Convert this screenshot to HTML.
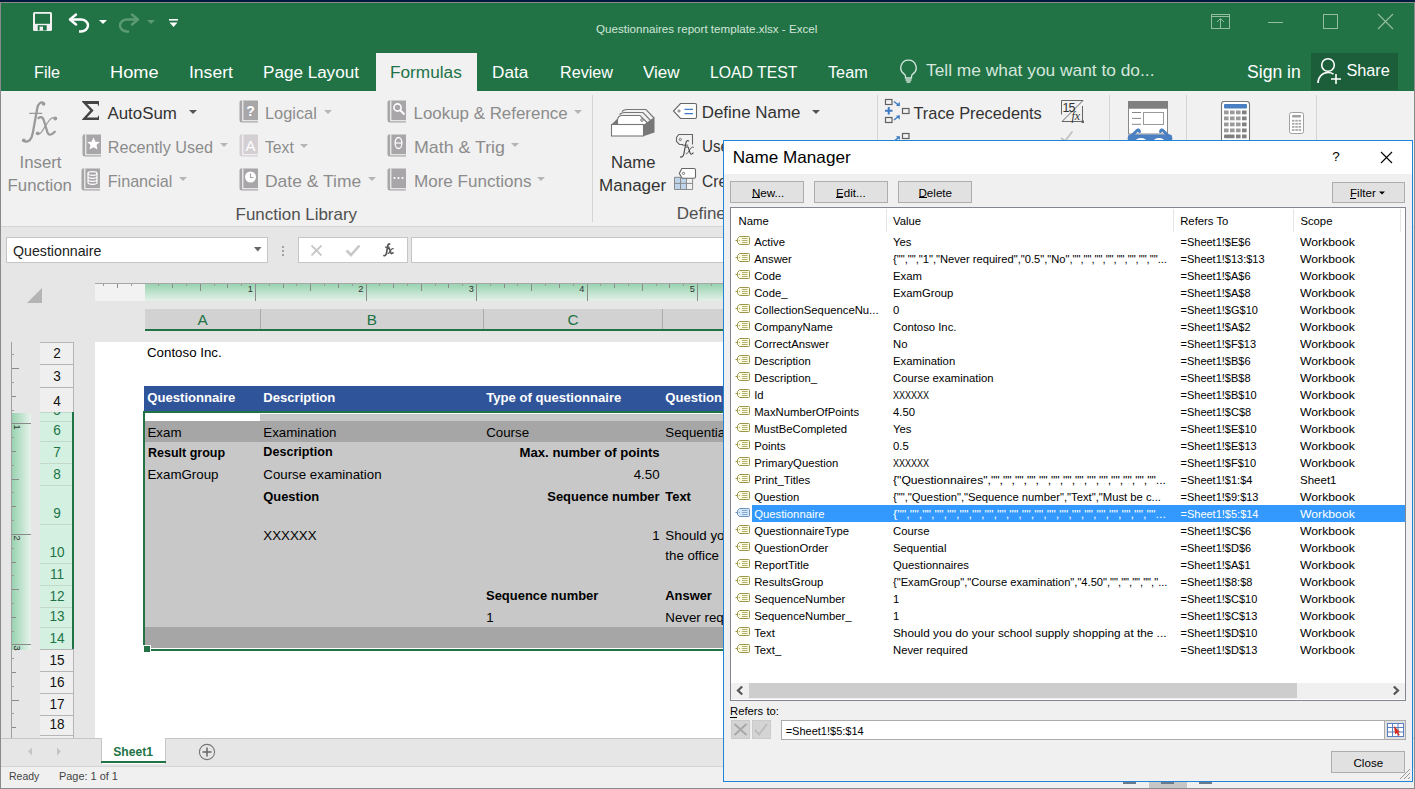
<!DOCTYPE html><html><head><meta charset="utf-8"><style>
html,body{margin:0;padding:0;}
body{width:1415px;height:789px;position:relative;overflow:hidden;background:#E6E6E6;font-family:"Liberation Sans",sans-serif;}
.t{position:absolute;white-space:nowrap;}
.r{position:absolute;}
</style></head><body>
<div class="r" style="left:0px;top:0px;width:1415px;height:789px;background:#E6E6E6;"></div>
<div class="r" style="left:0px;top:0px;width:1415px;height:3px;background:#011a3b;"></div>
<div class="r" style="left:0px;top:2px;width:1415px;height:1px;background:#8a8a8a;"></div>
<div class="r" style="left:1px;top:3px;width:1413px;height:88px;background:#217346;"></div>
<div class="r" style="left:0px;top:2px;width:1px;height:787px;background:#8a8a8a;"></div>
<div class="r" style="left:1414px;top:2px;width:1px;height:787px;background:#8a8a8a;"></div>
<svg class="r" style="left:32px;top:11px" width="21" height="21" viewBox="0 0 21 21"><rect x="1" y="1" width="19" height="19" rx="1.5" fill="#f2f2f2"/><rect x="3" y="2.8" width="15" height="10" fill="#217346"/><rect x="5.7" y="14.2" width="9" height="5.3" fill="#217346"/><rect x="7.6" y="15.6" width="3.4" height="3.9" fill="#f2f2f2"/></svg>
<svg class="r" style="left:68px;top:13px" width="24" height="20" viewBox="0 0 24 20"><path d="M2 6.5 L8 1.5 M2 6.5 L8 11.5" stroke="#fff" stroke-width="2.4" fill="none" stroke-linecap="round"/><path d="M2.5 6.5 H13 a7 6 0 0 1 0 12 H11" stroke="#fff" stroke-width="2.4" fill="none"/></svg>
<svg class="r" style="left:99px;top:20px" width="8" height="4" viewBox="0 0 8 4"><path d="M0 0h8l-4 4z" fill="#fff"/></svg>
<svg class="r" style="left:116px;top:13px" width="24" height="20" viewBox="0 0 24 20"><path d="M22 6.5 L16 1.5 M22 6.5 L16 11.5" stroke="#5c9a75" stroke-width="2.4" fill="none" stroke-linecap="round"/><path d="M21.5 6.5 H11 a7 6 0 0 0 0 12 H13" stroke="#5c9a75" stroke-width="2.4" fill="none"/></svg>
<svg class="r" style="left:147px;top:20px" width="8" height="4" viewBox="0 0 8 4"><path d="M0 0h8l-4 4z" fill="#5c9a75"/></svg>
<svg class="r" style="left:169px;top:19px" width="9" height="9" viewBox="0 0 9 9"><rect x="0" y="0" width="9" height="1.6" fill="#fff"/><path d="M0.5 3.5h8l-4 4.5z" fill="#fff"/></svg>
<div class="t" style="left:595.5px;top:20.5px;font-size:11.65px;line-height:15px;color:#d2e5d9;font-weight:normal;transform:scaleX(0.9974);transform-origin:0 0;">Questionnaires report template.xlsx - Excel</div>
<svg class="r" style="left:1210px;top:13px" width="21" height="17" viewBox="0 0 21 17"><rect x="1.5" y="1.5" width="18" height="14" fill="none" stroke="#95bda2" stroke-width="1"/><path d="M1.5 3.5h18M10.5 6v9.5M7 9l3.5-3.5 3.5 3.5" fill="none" stroke="#95bda2" stroke-width="1"/></svg>
<div class="r" style="left:1268px;top:22px;width:15px;height:1px;background:#95bda2;"></div>
<div class="r" style="left:1323px;top:14px;width:15px;height:15px;background:transparent;border:1px solid #95bda2;box-sizing:border-box"></div>
<svg class="r" style="left:1377px;top:13px" width="17" height="17" viewBox="0 0 17 17"><path d="M1 1l15 15M16 1L1 16" stroke="#95bda2" stroke-width="1.1"/></svg>
<div class="r" style="left:376px;top:53px;width:101px;height:38px;background:#F1F1F1;"></div>
<div class="t" style="left:34.3px;top:60.8px;font-size:17.3px;line-height:22px;color:#fff;font-weight:normal;transform:scaleX(0.9363);transform-origin:0 0;">File</div>
<div class="t" style="left:110.4px;top:60.8px;font-size:17.3px;line-height:22px;color:#fff;font-weight:normal;transform:scaleX(1.0532);transform-origin:0 0;">Home</div>
<div class="t" style="left:189.2px;top:60.8px;font-size:17.3px;line-height:22px;color:#fff;font-weight:normal;transform:scaleX(1.0147);transform-origin:0 0;">Insert</div>
<div class="t" style="left:263.4px;top:60.8px;font-size:17.3px;line-height:22px;color:#fff;font-weight:normal;transform:scaleX(0.9882);transform-origin:0 0;">Page Layout</div>
<div class="t" style="left:389.6px;top:60.8px;font-size:17.3px;line-height:22px;color:#217346;font-weight:normal;transform:scaleX(0.9973);transform-origin:0 0;">Formulas</div>
<div class="t" style="left:492.3px;top:60.8px;font-size:17.3px;line-height:22px;color:#fff;font-weight:normal;transform:scaleX(0.9934);transform-origin:0 0;">Data</div>
<div class="t" style="left:559.7px;top:60.8px;font-size:17.3px;line-height:22px;color:#fff;font-weight:normal;transform:scaleX(0.9361);transform-origin:0 0;">Review</div>
<div class="t" style="left:643.0px;top:60.8px;font-size:17.3px;line-height:22px;color:#fff;font-weight:normal;transform:scaleX(0.9843);transform-origin:0 0;">View</div>
<div class="t" style="left:710.2px;top:60.8px;font-size:17.3px;line-height:22px;color:#fff;font-weight:normal;transform:scaleX(0.9122);transform-origin:0 0;">LOAD TEST</div>
<div class="t" style="left:827.9px;top:60.8px;font-size:17.3px;line-height:22px;color:#fff;font-weight:normal;transform:scaleX(0.9385);transform-origin:0 0;">Team</div>
<svg class="r" style="left:899px;top:59px" width="19" height="24" viewBox="0 0 19 24"><path d="M9.5 1.2a7.6 7.6 0 0 0-4.3 13.9c.8.6 1.3 1.5 1.3 2.5v1.4h6v-1.4c0-1 .5-1.9 1.3-2.5A7.6 7.6 0 0 0 9.5 1.2z" fill="none" stroke="#d6e6dc" stroke-width="1.3"/><path d="M6.5 21h6M7.5 23h4" stroke="#d6e6dc" stroke-width="1.3"/></svg>
<div class="t" style="left:926.0px;top:58.5px;font-size:17.35px;line-height:23px;color:#d6e6dc;font-weight:normal;">Tell me what you want to do...</div>
<div class="t" style="left:1247.0px;top:61.4px;font-size:17.6px;line-height:23px;color:#fff;font-weight:normal;">Sign in</div>
<div class="r" style="left:1311px;top:53px;width:87px;height:37px;background:#1b5e39;"></div>
<svg class="r" style="left:1317px;top:57px" width="25" height="28" viewBox="0 0 25 28"><circle cx="11" cy="8" r="6.3" fill="none" stroke="#fff" stroke-width="1.6"/><path d="M1 26c0-6 4.5-10.5 10-10.5 2.2 0 4 .6 5.5 1.6" fill="none" stroke="#fff" stroke-width="1.6"/><path d="M19 17v10M14 22h10" stroke="#fff" stroke-width="1.6"/></svg>
<div class="t" style="left:1346.4px;top:59.9px;font-size:16.3px;line-height:21px;color:#fff;font-weight:normal;">Share</div>
<div class="r" style="left:1px;top:91px;width:1413px;height:135px;background:#F1F1F1;"></div>
<div class="r" style="left:1px;top:226px;width:1413px;height:1px;background:#D5D5D5;"></div>
<svg class="r" style="left:15px;top:95px" width="50" height="55" viewBox="15 95 50 55"><g fill="none" stroke="#9a9a9a" stroke-linecap="round"><path d="M43.8 103.2C41 101.3 38.2 103 37.2 108.5L32.8 133C31.6 139.5 28.5 142.8 24.5 141.2" stroke-width="2.3"/><path d="M29.6 113.3H41.8" stroke-width="1.2"/><path d="M38.5 118C41.5 116 43.2 117.5 44.2 121.5L47.3 132C48.3 135.3 50.8 136 54.8 131.8" stroke-width="2.3"/><path d="M55.5 118.2C52.5 116.5 50.5 118.5 47 123.5L42.5 130.5C40.5 134 38.8 134.5 37.5 133" stroke-width="1.3"/></g><circle cx="43.6" cy="104" r="1.8" fill="#9a9a9a"/><circle cx="23.8" cy="140.3" r="1.9" fill="#9a9a9a"/><circle cx="55.3" cy="118.5" r="1.9" fill="#9a9a9a"/><circle cx="37.7" cy="133.3" r="1.9" fill="#9a9a9a"/></svg>
<div class="t" style="left:19.5px;top:152.4px;font-size:16.8px;line-height:22px;color:#8a8a8a;font-weight:normal;">Insert</div>
<div class="t" style="left:7.6px;top:175.0px;font-size:16.8px;line-height:22px;color:#8a8a8a;font-weight:normal;">Function</div>
<svg class="r" style="left:81px;top:100px" width="19" height="21" viewBox="0 0 19 21"><path d="M1 1H18V6.5L16.5 4H6.2L12.6 10.5 6 17.5H16.5L18 15V20H1V19.5L9.2 10.5 1 1.8z" fill="#454545"/></svg>
<div class="t" style="left:107.4px;top:102.9px;font-size:16.9px;line-height:22px;color:#333;font-weight:normal;">AutoSum</div>
<svg class="r" style="left:189px;top:110px" width="8" height="4" viewBox="0 0 8 4"><path d="M0 0h8l-4 4z" fill="#555"/></svg>
<svg class="r" style="left:239px;top:100px" width="20" height="23" viewBox="0 0 20 23"><path d="M1.5 0.5H19V22.5H3A2.5 2.5 0 0 1 0.5 20V2z" fill="#A8A6A8"/><path d="M3.8 0.5V20.8H19" stroke="#fafafa" stroke-width="1.1" fill="none"/><text x="11.5" y="16" font-family="Liberation Sans" font-weight="bold" font-size="14" fill="#fff" text-anchor="middle">?</text></svg>
<svg class="r" style="left:82px;top:134px" width="20" height="23" viewBox="0 0 20 23"><path d="M1.5 0.5H19V22.5H3A2.5 2.5 0 0 1 0.5 20V2z" fill="#A8A6A8"/><path d="M3.8 0.5V20.8H19" stroke="#fafafa" stroke-width="1.1" fill="none"/><path d="M11.5 3.5l1.9 4.2 4.5.4-3.4 3 1 4.4-4-2.3-4 2.3 1-4.4-3.4-3 4.5-.4z" fill="#fff"/></svg>
<svg class="r" style="left:81px;top:168px" width="20" height="23" viewBox="0 0 20 23"><path d="M1.5 0.5H19V22.5H3A2.5 2.5 0 0 1 0.5 20V2z" fill="#A8A6A8"/><path d="M3.8 0.5V20.8H19" stroke="#fafafa" stroke-width="1.1" fill="none"/><ellipse cx="11.5" cy="5.5" rx="4.5" ry="1.8" fill="none" stroke="#fff" stroke-width="1.2"/><path d="M7 5.5v9c0 1 2 1.8 4.5 1.8s4.5-.8 4.5-1.8v-9M7 8.5c0 1 2 1.8 4.5 1.8s4.5-.8 4.5-1.8M7 11.5c0 1 2 1.8 4.5 1.8s4.5-.8 4.5-1.8" fill="none" stroke="#fff" stroke-width="1.2"/></svg>
<svg class="r" style="left:239px;top:134px" width="20" height="23" viewBox="0 0 20 23"><path d="M1.5 0.5H19V22.5H3A2.5 2.5 0 0 1 0.5 20V2z" fill="#D3CFD3"/><path d="M3.8 0.5V20.8H19" stroke="#fafafa" stroke-width="1.1" fill="none"/><text x="11.5" y="16.5" font-family="Liberation Sans" font-size="15" fill="#fff" text-anchor="middle">A</text></svg>
<svg class="r" style="left:239px;top:168px" width="20" height="23" viewBox="0 0 20 23"><path d="M1.5 0.5H19V22.5H3A2.5 2.5 0 0 1 0.5 20V2z" fill="#A8A6A8"/><path d="M3.8 0.5V20.8H19" stroke="#fafafa" stroke-width="1.1" fill="none"/><circle cx="11.5" cy="9" r="5.5" fill="#fff"/><path d="M11.5 5.5V9.5H14.5" stroke="#A8A6A8" stroke-width="1.2" fill="none"/></svg>
<svg class="r" style="left:387px;top:100px" width="20" height="23" viewBox="0 0 20 23"><path d="M1.5 0.5H19V22.5H3A2.5 2.5 0 0 1 0.5 20V2z" fill="#A8A6A8"/><path d="M3.8 0.5V20.8H19" stroke="#fafafa" stroke-width="1.1" fill="none"/><circle cx="10.5" cy="7.5" r="3.6" fill="none" stroke="#fff" stroke-width="1.6"/><path d="M13 10l4.5 4.5" stroke="#fff" stroke-width="2"/></svg>
<svg class="r" style="left:387px;top:134px" width="20" height="23" viewBox="0 0 20 23"><path d="M1.5 0.5H19V22.5H3A2.5 2.5 0 0 1 0.5 20V2z" fill="#A8A6A8"/><path d="M3.8 0.5V20.8H19" stroke="#fafafa" stroke-width="1.1" fill="none"/><ellipse cx="11.5" cy="9" rx="3.4" ry="5.5" fill="none" stroke="#fff" stroke-width="1.3"/><path d="M8 9h7" stroke="#fff" stroke-width="1.2"/></svg>
<svg class="r" style="left:387px;top:168px" width="20" height="23" viewBox="0 0 20 23"><path d="M1.5 0.5H19V22.5H3A2.5 2.5 0 0 1 0.5 20V2z" fill="#A8A6A8"/><path d="M3.8 0.5V20.8H19" stroke="#fafafa" stroke-width="1.1" fill="none"/><circle cx="7.5" cy="10" r="1.1" fill="#fff"/><circle cx="11.5" cy="10" r="1.1" fill="#fff"/><circle cx="15.5" cy="10" r="1.1" fill="#fff"/></svg>
<div class="t" style="left:107.7px;top:137.4px;font-size:16.22px;line-height:21px;color:#8c8c8c;font-weight:normal;">Recently Used</div>
<svg class="r" style="left:220px;top:143px" width="8" height="4" viewBox="0 0 8 4"><path d="M0 0h8l-4 4z" fill="#b5b5b5"/></svg>
<div class="t" style="left:107.7px;top:171.3px;font-size:16.17px;line-height:21px;color:#8c8c8c;font-weight:normal;">Financial</div>
<svg class="r" style="left:179px;top:177px" width="8" height="4" viewBox="0 0 8 4"><path d="M0 0h8l-4 4z" fill="#b5b5b5"/></svg>
<div class="t" style="left:265.4px;top:102.7px;font-size:16.6px;line-height:22px;color:#8c8c8c;font-weight:normal;transform:scaleX(0.9848);transform-origin:0 0;">Logical</div>
<svg class="r" style="left:324px;top:110px" width="8" height="4" viewBox="0 0 8 4"><path d="M0 0h8l-4 4z" fill="#b5b5b5"/></svg>
<div class="t" style="left:265.4px;top:136.7px;font-size:16.6px;line-height:22px;color:#8c8c8c;font-weight:normal;transform:scaleX(0.9460);transform-origin:0 0;">Text</div>
<svg class="r" style="left:300px;top:144px" width="8" height="4" viewBox="0 0 8 4"><path d="M0 0h8l-4 4z" fill="#b5b5b5"/></svg>
<div class="t" style="left:265.4px;top:170.6px;font-size:16.6px;line-height:22px;color:#8c8c8c;font-weight:normal;transform:scaleX(1.0533);transform-origin:0 0;">Date &amp; Time</div>
<svg class="r" style="left:368px;top:177px" width="8" height="4" viewBox="0 0 8 4"><path d="M0 0h8l-4 4z" fill="#b5b5b5"/></svg>
<div class="t" style="left:413.5px;top:102.6px;font-size:16.92px;line-height:22px;color:#8c8c8c;font-weight:normal;">Lookup &amp; Reference</div>
<svg class="r" style="left:574px;top:110px" width="8" height="4" viewBox="0 0 8 4"><path d="M0 0h8l-4 4z" fill="#b5b5b5"/></svg>
<div class="t" style="left:413.5px;top:136.7px;font-size:16.6px;line-height:22px;color:#8c8c8c;font-weight:normal;transform:scaleX(1.0723);transform-origin:0 0;">Math &amp; Trig</div>
<svg class="r" style="left:511px;top:143px" width="8" height="4" viewBox="0 0 8 4"><path d="M0 0h8l-4 4z" fill="#b5b5b5"/></svg>
<div class="t" style="left:413.5px;top:170.6px;font-size:16.6px;line-height:22px;color:#8c8c8c;font-weight:normal;transform:scaleX(1.0272);transform-origin:0 0;">More Functions</div>
<svg class="r" style="left:537px;top:177px" width="8" height="4" viewBox="0 0 8 4"><path d="M0 0h8l-4 4z" fill="#b5b5b5"/></svg>
<div class="t" style="left:235.6px;top:203.7px;font-size:16.95px;line-height:22px;color:#505050;font-weight:normal;">Function Library</div>
<div class="r" style="left:592px;top:95px;width:1px;height:127px;background:#D5D5D5;"></div>
<svg class="r" style="left:610px;top:105px" width="46" height="34" viewBox="0 0 46 34"><path d="M12 6.5Q14 4.5 17 4.5H36L44 13" fill="none" stroke="#777" stroke-width="1.1"/><path d="M9.5 9.5Q11.5 7.5 15 7.5H33L41 16" fill="none" stroke="#777" stroke-width="1.1"/><path d="M7.5 19V15.5Q7.5 10.5 12.5 10.5H30L38.5 19" fill="#fff" stroke="#777" stroke-width="1.1"/><circle cx="32" cy="15" r="1.3" fill="none" stroke="#777" stroke-width="1"/><path d="M1.5 19.5L7 14V19.5z" fill="#777"/><rect x="1.5" y="19.5" width="32" height="11.5" fill="#fff" stroke="#777" stroke-width="1.1"/><path d="M34 19.5L44.5 12V27.5L34 31z" fill="#777"/></svg>
<div class="t" style="left:610.7px;top:151.6px;font-size:16.8px;line-height:22px;color:#333;font-weight:normal;transform:scaleX(0.9931);transform-origin:0 0;">Name</div>
<div class="t" style="left:599.4px;top:175.0px;font-size:16.8px;line-height:22px;color:#333;font-weight:normal;transform:scaleX(1.0151);transform-origin:0 0;">Manager</div>
<svg class="r" style="left:670px;top:100px" width="30" height="22" viewBox="670 100 30 22"><path d="M680.5 103.5H695Q696.5 103.5 696.5 105V117Q696.5 118.5 695 118.5H680.5L673.5 111z" fill="#fff" stroke="#666" stroke-width="1.1"/><circle cx="679" cy="111" r="1.1" fill="none" stroke="#666" stroke-width="0.9"/><path d="M684.5 109.3h8.5M684.5 113.6h8.5" stroke="#3e7cc2" stroke-width="1.2"/></svg>
<div class="t" style="left:701.7px;top:102.3px;font-size:16.93px;line-height:22px;color:#333;font-weight:normal;">Define Name</div>
<svg class="r" style="left:812px;top:110px" width="8" height="4" viewBox="0 0 8 4"><path d="M0 0h8l-4 4z" fill="#555"/></svg>
<svg class="r" style="left:670px;top:130px" width="30" height="30" viewBox="670 130 30 30"><path d="M683 144.5H679.5L676.5 141.5V137.5L678.8 134.5H692.5V144.5" fill="none" stroke="#666" stroke-width="1.1"/><circle cx="680.3" cy="139.5" r="1.1" fill="none" stroke="#666" stroke-width="0.9"/><g transform="translate(670.2 97.6) scale(0.42)"><g fill="none" stroke="#444" stroke-linecap="round"><path d="M43.8 103.2C41 101.3 38.2 103 37.2 108.5L32.8 133C31.6 139.5 28.5 142.8 24.5 141.2" stroke-width="2.6"/><path d="M29.6 113.3H41.8" stroke-width="2"/><path d="M38.5 118C41.5 116 43.2 117.5 44.2 121.5L47.3 132C48.3 135.3 50.8 136 54.8 131.8" stroke-width="2.6"/><path d="M55.5 118.2C52.5 116.5 50.5 118.5 47 123.5L42.5 130.5C40.5 134 38.8 134.5 37.5 133" stroke-width="2"/></g></g></svg>
<div class="t" style="left:701.7px;top:136.4px;font-size:16.9px;line-height:22px;color:#333;font-weight:normal;transform:scaleX(0.9000);transform-origin:0 0;">Use in Formula</div>
<svg class="r" style="left:670px;top:165px" width="30" height="28" viewBox="670 165 30 28"><rect x="674.3" y="177.1" width="12.2" height="12.6" fill="#bcd3ea"/><path d="M674.5 177.1V189.5H692.6V178.5M674.5 183.4H692.6M680.5 177.1V189.5M686.5 177.1V189.5M674.5 177.3H680" fill="none" stroke="#8a8a8a" stroke-width="1"/><path d="M681.8 168.5H694Q695.5 168.5 695.5 170V176.8Q695.5 178.3 694 178.3H682.2L679.3 173.4z" fill="#fff" stroke="#666" stroke-width="1.1"/><circle cx="683.5" cy="173.4" r="1.1" fill="none" stroke="#666" stroke-width="0.9"/></svg>
<div class="t" style="left:701.7px;top:170.5px;font-size:16.9px;line-height:22px;color:#333;font-weight:normal;transform:scaleX(0.9200);transform-origin:0 0;">Create from Selection</div>
<div class="t" style="left:676.8px;top:203.2px;font-size:16.95px;line-height:22px;color:#505050;font-weight:normal;">Defined Names</div>
<div class="r" style="left:877px;top:95px;width:1px;height:127px;background:#D5D5D5;"></div>
<svg class="r" style="left:880px;top:95px" width="35" height="30" viewBox="880 95 35 30"><g fill="none" stroke="#606060" stroke-width="1.2"><rect x="885.5" y="99.5" width="6.5" height="5"/><rect x="885.5" y="117.5" width="6.5" height="5"/><rect x="902.5" y="108.5" width="6.5" height="5"/></g><path d="M885 110.8h7.5M888.75 107v7.5" stroke="#3e7cc2" stroke-width="2"/><path d="M894 101.5L899 105.5M894 120L899 116" stroke="#3e7cc2" stroke-width="1.5"/><path d="M899.8 106.3V101.8L896 105.8zM899.8 115.2V119.7L896 115.7z" fill="#3e7cc2"/></svg>
<div class="t" style="left:913.5px;top:103.1px;font-size:16.33px;line-height:21px;color:#333;font-weight:normal;">Trace Precedents</div>
<svg class="r" style="left:1055px;top:95px" width="35" height="30" viewBox="1055 95 35 30"><path d="M1061.5 114.5V100.5H1083L1062 121.5H1082.5V106" fill="none" stroke="#666" stroke-width="1"/><text x="1062.5" y="112" font-family="Liberation Sans" font-size="12.5" letter-spacing="-1" fill="#333">15</text><text x="1071.5" y="119.5" font-family="Liberation Serif" font-style="italic" font-size="12" fill="#333">fx</text><rect x="1081.5" y="120.5" width="2.5" height="2.5" fill="#666"/></svg>
<svg class="r" style="left:880px;top:126px" width="35" height="15" viewBox="880 126 35 15"><rect x="902.5" y="133.5" width="6.5" height="5" fill="none" stroke="#606060" stroke-width="1.2"/><path d="M895 140.5L899 137" stroke="#3e7cc2" stroke-width="1.5"/><path d="M900 136.2H895.8L899.8 140z" fill="#3e7cc2"/></svg>
<svg class="r" style="left:1055px;top:126px" width="30" height="15" viewBox="1055 126 30 15"><path d="M1061 138l4 3M1065 141l7.5-9.5" stroke="#c2c2c2" stroke-width="1.8" fill="none"/></svg>
<div class="r" style="left:1109px;top:95px;width:1px;height:127px;background:#D5D5D5;"></div>
<svg class="r" style="left:1120px;top:95px" width="60" height="46" viewBox="1120 95 60 46"><rect x="1128.5" y="108" width="39" height="26" fill="#fff" stroke="#888" stroke-width="1"/><rect x="1128" y="101" width="40" height="7.5" fill="#808080"/><path d="M1132 112.5h9M1132 118.4h9M1132 124.3h9" stroke="#888" stroke-width="1"/><rect x="1143.5" y="112.5" width="20" height="12" fill="#fff" stroke="#999" stroke-width="1"/><path d="M1129 138.5L1137 130.5Q1138.5 129 1139.5 131.5M1171 138.5L1163 130.5Q1161.5 129 1160.5 131.5" stroke="#4a7fc1" stroke-width="3" fill="none" stroke-linecap="round"/><rect x="1128" y="134.5" width="44" height="6" rx="2" fill="#4a7fc1"/><ellipse cx="1141" cy="141" rx="5.5" ry="3" fill="#fff"/><ellipse cx="1159" cy="141" rx="5.5" ry="3" fill="#fff"/></svg>
<div class="r" style="left:1186px;top:95px;width:1px;height:127px;background:#D5D5D5;"></div>
<svg class="r" style="left:1220px;top:101px" width="31" height="41" viewBox="0 0 31 41"><rect x="1.5" y="0.5" width="28" height="42" rx="3" fill="#fff" stroke="#777" stroke-width="1.1"/><rect x="4" y="3" width="23" height="4.5" rx="1" fill="#4a7fc1"/><rect x="4" y="9.5" width="4.6" height="3.8" fill="#9a9a9a"/><rect x="10" y="9.5" width="4.6" height="3.8" fill="#9a9a9a"/><rect x="16" y="9.5" width="4.6" height="3.8" fill="#9a9a9a"/><rect x="22" y="9.5" width="4.6" height="3.8" fill="#808080"/><rect x="4" y="15.5" width="4.6" height="3.8" fill="#9a9a9a"/><rect x="10" y="15.5" width="4.6" height="3.8" fill="#9a9a9a"/><rect x="16" y="15.5" width="4.6" height="3.8" fill="#9a9a9a"/><rect x="22" y="15.5" width="4.6" height="3.8" fill="#808080"/><rect x="4" y="21.5" width="4.6" height="3.8" fill="#9a9a9a"/><rect x="10" y="21.5" width="4.6" height="3.8" fill="#9a9a9a"/><rect x="16" y="21.5" width="4.6" height="3.8" fill="#9a9a9a"/><rect x="22" y="21.5" width="4.6" height="3.8" fill="#808080"/><rect x="4" y="27.5" width="4.6" height="3.8" fill="#9a9a9a"/><rect x="10" y="27.5" width="4.6" height="3.8" fill="#9a9a9a"/><rect x="16" y="27.5" width="4.6" height="3.8" fill="#9a9a9a"/><rect x="22" y="27.5" width="4.6" height="3.8" fill="#808080"/><rect x="4" y="33.5" width="10.6" height="3.8" rx="1" fill="#808080"/><rect x="16" y="33.5" width="4.6" height="3.8" fill="#808080"/><rect x="22" y="33.5" width="4.6" height="3.8" fill="#808080"/></svg>
<svg class="r" style="left:1288px;top:111px" width="17" height="24" viewBox="0 0 17 24"><rect x="1.5" y="1.5" width="14" height="21" rx="2" fill="#fff" stroke="#a0a0a0" stroke-width="1"/><rect x="4" y="4" width="9" height="2.5" rx="1" fill="#a0a0a0"/><rect x="4.0" y="8.8" width="2.5" height="1.8" fill="#a8a8a8"/><rect x="7.3" y="8.8" width="2.5" height="1.8" fill="#a8a8a8"/><rect x="10.6" y="8.8" width="2.5" height="1.8" fill="#a8a8a8"/><rect x="4.0" y="11.9" width="2.5" height="1.8" fill="#a8a8a8"/><rect x="7.3" y="11.9" width="2.5" height="1.8" fill="#a8a8a8"/><rect x="10.6" y="11.9" width="2.5" height="1.8" fill="#a8a8a8"/><rect x="4.0" y="15.0" width="2.5" height="1.8" fill="#a8a8a8"/><rect x="7.3" y="15.0" width="2.5" height="1.8" fill="#a8a8a8"/><rect x="10.6" y="15.0" width="2.5" height="1.8" fill="#a8a8a8"/><rect x="4.0" y="18.1" width="2.5" height="1.8" fill="#a8a8a8"/><rect x="7.3" y="18.1" width="2.5" height="1.8" fill="#a8a8a8"/><rect x="10.6" y="18.1" width="2.5" height="1.8" fill="#a8a8a8"/></svg>
<div class="r" style="left:1316px;top:95px;width:1px;height:127px;background:#D5D5D5;"></div>
<div class="r" style="left:6px;top:237px;width:262px;height:26px;background:#fff;border:1px solid #C6C6C6;box-sizing:border-box"></div>
<div class="t" style="left:13.0px;top:241.5px;font-size:14.2px;line-height:18px;color:#222;font-weight:normal;">Questionnaire</div>
<svg class="r" style="left:254px;top:247px" width="8" height="5" viewBox="0 0 8 5"><path d="M0 0h7.5l-3.75 4.5z" fill="#666"/></svg>
<div class="r" style="left:282px;top:245.5px;width:2px;height:2px;background:#a0a0a0;"></div>
<div class="r" style="left:282px;top:249.5px;width:2px;height:2px;background:#a0a0a0;"></div>
<div class="r" style="left:282px;top:253.5px;width:2px;height:2px;background:#a0a0a0;"></div>
<div class="r" style="left:298px;top:237px;width:110px;height:26px;background:#fff;border:1px solid #C6C6C6;box-sizing:border-box"></div>
<svg class="r" style="left:310px;top:244px" width="13" height="13" viewBox="0 0 13 13"><path d="M1.5 1.5l10 10M11.5 1.5l-10 10" stroke="#c8c8c8" stroke-width="1.8"/></svg>
<svg class="r" style="left:345px;top:244px" width="16" height="13" viewBox="0 0 16 13"><path d="M1.5 6.5l4.5 4.5L14.5 1.5" stroke="#c8c8c8" stroke-width="2.6" fill="none"/></svg>
<svg class="r" style="left:375px;top:238px" width="25" height="22" viewBox="375 238 25 22"><g transform="translate(376.6 213.2) scale(0.3)"><g fill="none" stroke="#555" stroke-linecap="round"><path d="M43.8 103.2C41 101.3 38.2 103 37.2 108.5L32.8 133C31.6 139.5 28.5 142.8 24.5 141.2" stroke-width="5.5"/><path d="M29.6 113.3H41.8" stroke-width="4"/><path d="M38.5 118C41.5 116 43.2 117.5 44.2 121.5L47.3 132C48.3 135.3 50.8 136 54.8 131.8" stroke-width="5.5"/><path d="M55.5 118.2C52.5 116.5 50.5 118.5 47 123.5L42.5 130.5C40.5 134 38.8 134.5 37.5 133" stroke-width="4"/></g></g></svg>
<div class="r" style="left:411px;top:237px;width:330px;height:26px;background:#fff;border:1px solid #C6C6C6;box-sizing:border-box"></div>
<svg class="r" style="left:27px;top:288px" width="16" height="15" viewBox="0 0 16 15"><path d="M15 0V15H0z" fill="#b4b4b4"/></svg>
<div class="r" style="left:95px;top:283px;width:630px;height:1px;background:#a8a8a8;"></div>
<div class="r" style="left:95px;top:284px;width:50px;height:17px;background:#F2F2F2;"></div>
<div class="r" style="left:145px;top:284px;width:580px;height:17px;background:linear-gradient(#98d3b0,#e4f1e9)"></div>
<div class="r" style="left:103px;top:284px;width:1px;height:2px;background:#9a9a9a;"></div>
<div class="r" style="left:117px;top:284px;width:1px;height:4px;background:#8a8a8a;"></div>
<div class="r" style="left:131px;top:284px;width:1px;height:2px;background:#9a9a9a;"></div>
<div class="r" style="left:158px;top:284px;width:1px;height:2px;background:#9a9a9a;"></div>
<div class="r" style="left:172px;top:284px;width:1px;height:4px;background:#8a8a8a;"></div>
<div class="r" style="left:186px;top:284px;width:1px;height:2px;background:#9a9a9a;"></div>
<div class="r" style="left:200px;top:284px;width:1px;height:7px;background:#8a8a8a;"></div>
<div class="r" style="left:214px;top:284px;width:1px;height:2px;background:#9a9a9a;"></div>
<div class="r" style="left:227px;top:284px;width:1px;height:4px;background:#8a8a8a;"></div>
<div class="r" style="left:241px;top:284px;width:1px;height:2px;background:#9a9a9a;"></div>
<div class="r" style="left:255px;top:284px;width:1px;height:17px;background:#8a8a8a;"></div>
<div class="r" style="left:269px;top:284px;width:1px;height:2px;background:#9a9a9a;"></div>
<div class="r" style="left:283px;top:284px;width:1px;height:4px;background:#8a8a8a;"></div>
<div class="r" style="left:296px;top:284px;width:1px;height:2px;background:#9a9a9a;"></div>
<div class="r" style="left:310px;top:284px;width:1px;height:7px;background:#8a8a8a;"></div>
<div class="r" style="left:324px;top:284px;width:1px;height:2px;background:#9a9a9a;"></div>
<div class="r" style="left:338px;top:284px;width:1px;height:4px;background:#8a8a8a;"></div>
<div class="r" style="left:352px;top:284px;width:1px;height:2px;background:#9a9a9a;"></div>
<div class="r" style="left:366px;top:284px;width:1px;height:17px;background:#8a8a8a;"></div>
<div class="r" style="left:379px;top:284px;width:1px;height:2px;background:#9a9a9a;"></div>
<div class="r" style="left:393px;top:284px;width:1px;height:4px;background:#8a8a8a;"></div>
<div class="r" style="left:407px;top:284px;width:1px;height:2px;background:#9a9a9a;"></div>
<div class="r" style="left:421px;top:284px;width:1px;height:7px;background:#8a8a8a;"></div>
<div class="r" style="left:435px;top:284px;width:1px;height:2px;background:#9a9a9a;"></div>
<div class="r" style="left:448px;top:284px;width:1px;height:4px;background:#8a8a8a;"></div>
<div class="r" style="left:462px;top:284px;width:1px;height:2px;background:#9a9a9a;"></div>
<div class="r" style="left:476px;top:284px;width:1px;height:17px;background:#8a8a8a;"></div>
<div class="r" style="left:490px;top:284px;width:1px;height:2px;background:#9a9a9a;"></div>
<div class="r" style="left:504px;top:284px;width:1px;height:4px;background:#8a8a8a;"></div>
<div class="r" style="left:517px;top:284px;width:1px;height:2px;background:#9a9a9a;"></div>
<div class="r" style="left:531px;top:284px;width:1px;height:7px;background:#8a8a8a;"></div>
<div class="r" style="left:545px;top:284px;width:1px;height:2px;background:#9a9a9a;"></div>
<div class="r" style="left:559px;top:284px;width:1px;height:4px;background:#8a8a8a;"></div>
<div class="r" style="left:573px;top:284px;width:1px;height:2px;background:#9a9a9a;"></div>
<div class="r" style="left:587px;top:284px;width:1px;height:17px;background:#8a8a8a;"></div>
<div class="r" style="left:600px;top:284px;width:1px;height:2px;background:#9a9a9a;"></div>
<div class="r" style="left:614px;top:284px;width:1px;height:4px;background:#8a8a8a;"></div>
<div class="r" style="left:628px;top:284px;width:1px;height:2px;background:#9a9a9a;"></div>
<div class="r" style="left:642px;top:284px;width:1px;height:7px;background:#8a8a8a;"></div>
<div class="r" style="left:656px;top:284px;width:1px;height:2px;background:#9a9a9a;"></div>
<div class="r" style="left:669px;top:284px;width:1px;height:4px;background:#8a8a8a;"></div>
<div class="r" style="left:683px;top:284px;width:1px;height:2px;background:#9a9a9a;"></div>
<div class="r" style="left:697px;top:284px;width:1px;height:17px;background:#8a8a8a;"></div>
<div class="r" style="left:711px;top:284px;width:1px;height:2px;background:#9a9a9a;"></div>
<div class="t" style="left:0;width:252.9px;text-align:right;top:282.8px;font-size:9.2px;line-height:12px;color:#333;font-weight:normal;">1</div>
<div class="t" style="left:0;width:363.4px;text-align:right;top:282.8px;font-size:9.2px;line-height:12px;color:#333;font-weight:normal;">2</div>
<div class="t" style="left:0;width:473.9px;text-align:right;top:282.8px;font-size:9.2px;line-height:12px;color:#333;font-weight:normal;">3</div>
<div class="t" style="left:0;width:584.4px;text-align:right;top:282.8px;font-size:9.2px;line-height:12px;color:#333;font-weight:normal;">4</div>
<div class="t" style="left:0;width:694.9px;text-align:right;top:282.8px;font-size:9.2px;line-height:12px;color:#333;font-weight:normal;">5</div>
<div class="r" style="left:145px;top:309px;width:580px;height:22px;background:#D2D2D2;"></div>
<div class="r" style="left:145px;top:329px;width:580px;height:2px;background:#217346;"></div>
<div class="r" style="left:260px;top:309px;width:1px;height:20px;background:#ABABAB;"></div>
<div class="r" style="left:483px;top:309px;width:1px;height:20px;background:#ABABAB;"></div>
<div class="r" style="left:662px;top:309px;width:1px;height:20px;background:#ABABAB;"></div>
<div class="t" style="left:2.5px;width:400px;text-align:center;top:309.7px;font-size:15.3px;line-height:20px;color:#217346;font-weight:normal;">A</div>
<div class="t" style="left:171.8px;width:400px;text-align:center;top:309.7px;font-size:15.3px;line-height:20px;color:#217346;font-weight:normal;">B</div>
<div class="t" style="left:373.0px;width:400px;text-align:center;top:309.7px;font-size:15.3px;line-height:20px;color:#217346;font-weight:normal;">C</div>
<div class="r" style="left:95px;top:342px;width:630px;height:396px;background:#fff;"></div>
<div class="r" style="left:11px;top:342px;width:1px;height:396px;background:#a0a0a0;"></div>
<div class="r" style="left:12px;top:413px;width:19px;height:237px;background:linear-gradient(90deg,#98d3b0,#e4f1e9 95%)"></div>
<div class="r" style="left:12px;top:354px;width:2px;height:1px;background:#9a9a9a;"></div>
<div class="r" style="left:12px;top:368px;width:7px;height:1px;background:#8a8a8a;"></div>
<div class="r" style="left:12px;top:382px;width:2px;height:1px;background:#9a9a9a;"></div>
<div class="r" style="left:12px;top:396px;width:4px;height:1px;background:#8a8a8a;"></div>
<div class="r" style="left:12px;top:410px;width:2px;height:1px;background:#9a9a9a;"></div>
<div class="r" style="left:12px;top:423px;width:19px;height:1px;background:#8a8a8a;"></div>
<div class="r" style="left:12px;top:437px;width:2px;height:1px;background:#9a9a9a;"></div>
<div class="r" style="left:12px;top:451px;width:4px;height:1px;background:#8a8a8a;"></div>
<div class="r" style="left:12px;top:465px;width:2px;height:1px;background:#9a9a9a;"></div>
<div class="r" style="left:12px;top:479px;width:7px;height:1px;background:#8a8a8a;"></div>
<div class="r" style="left:12px;top:492px;width:2px;height:1px;background:#9a9a9a;"></div>
<div class="r" style="left:12px;top:506px;width:4px;height:1px;background:#8a8a8a;"></div>
<div class="r" style="left:12px;top:520px;width:2px;height:1px;background:#9a9a9a;"></div>
<div class="r" style="left:12px;top:534px;width:19px;height:1px;background:#8a8a8a;"></div>
<div class="r" style="left:12px;top:548px;width:2px;height:1px;background:#9a9a9a;"></div>
<div class="r" style="left:12px;top:562px;width:4px;height:1px;background:#8a8a8a;"></div>
<div class="r" style="left:12px;top:575px;width:2px;height:1px;background:#9a9a9a;"></div>
<div class="r" style="left:12px;top:589px;width:7px;height:1px;background:#8a8a8a;"></div>
<div class="r" style="left:12px;top:603px;width:2px;height:1px;background:#9a9a9a;"></div>
<div class="r" style="left:12px;top:617px;width:4px;height:1px;background:#8a8a8a;"></div>
<div class="r" style="left:12px;top:631px;width:2px;height:1px;background:#9a9a9a;"></div>
<div class="r" style="left:12px;top:644px;width:19px;height:1px;background:#8a8a8a;"></div>
<div class="r" style="left:12px;top:658px;width:2px;height:1px;background:#9a9a9a;"></div>
<div class="r" style="left:12px;top:672px;width:4px;height:1px;background:#8a8a8a;"></div>
<div class="r" style="left:12px;top:686px;width:2px;height:1px;background:#9a9a9a;"></div>
<div class="r" style="left:12px;top:700px;width:7px;height:1px;background:#8a8a8a;"></div>
<div class="r" style="left:12px;top:713px;width:2px;height:1px;background:#9a9a9a;"></div>
<div class="r" style="left:12px;top:727px;width:4px;height:1px;background:#8a8a8a;"></div>
<div class="t" style="left:12px;top:424.4px;width:10px;height:9px;font-size:9.2px;line-height:9px;color:#333;transform:rotate(90deg);transform-origin:4px 4.5px">1</div>
<div class="t" style="left:12px;top:534.9px;width:10px;height:9px;font-size:9.2px;line-height:9px;color:#333;transform:rotate(90deg);transform-origin:4px 4.5px">2</div>
<div class="t" style="left:12px;top:645.4px;width:10px;height:9px;font-size:9.2px;line-height:9px;color:#333;transform:rotate(90deg);transform-origin:4px 4.5px">3</div>
<div class="r" style="left:40px;top:342px;width:33px;height:22px;background:#EFEFEF;"></div>
<div class="r" style="left:40px;top:342px;width:33px;height:1px;background:#B5B5B5;"></div>
<div class="r" style="left:40px;top:342px;width:33px;height:22px;overflow:hidden"><div class="t" style="left:0;width:34px;text-align:center;top:1.6px;font-size:14.6px;line-height:19px;color:#111;transform:scaleX(0.93);transform-origin:50% 0">2</div></div>
<div class="r" style="left:73px;top:342px;width:1px;height:22px;background:#B5B5B5;"></div>
<div class="r" style="left:40px;top:364px;width:33px;height:23px;background:#EFEFEF;"></div>
<div class="r" style="left:40px;top:364px;width:33px;height:1px;background:#B5B5B5;"></div>
<div class="r" style="left:40px;top:364px;width:33px;height:23px;overflow:hidden"><div class="t" style="left:0;width:34px;text-align:center;top:2.6px;font-size:14.6px;line-height:19px;color:#111;transform:scaleX(0.93);transform-origin:50% 0">3</div></div>
<div class="r" style="left:73px;top:364px;width:1px;height:23px;background:#B5B5B5;"></div>
<div class="r" style="left:40px;top:387px;width:33px;height:25px;background:#EFEFEF;"></div>
<div class="r" style="left:40px;top:387px;width:33px;height:1px;background:#B5B5B5;"></div>
<div class="r" style="left:40px;top:387px;width:33px;height:25px;overflow:hidden"><div class="t" style="left:0;width:34px;text-align:center;top:4.6px;font-size:14.6px;line-height:19px;color:#111;transform:scaleX(0.93);transform-origin:50% 0">4</div></div>
<div class="r" style="left:73px;top:387px;width:1px;height:25px;background:#B5B5B5;"></div>
<div class="r" style="left:40px;top:412px;width:33px;height:9px;background:#D3F0E0;"></div>
<div class="r" style="left:40px;top:412px;width:33px;height:1px;background:#c3d9cc;"></div>
<div class="r" style="left:40px;top:412px;width:33px;height:9px;overflow:hidden"><div class="t" style="left:0;width:34px;text-align:center;top:-11.4px;font-size:14.6px;line-height:19px;color:#217346;transform:scaleX(0.93);transform-origin:50% 0">5</div></div>
<div class="r" style="left:72px;top:412px;width:2px;height:9px;background:#217346;"></div>
<div class="r" style="left:40px;top:421px;width:33px;height:20px;background:#D3F0E0;"></div>
<div class="r" style="left:40px;top:421px;width:33px;height:1px;background:#c3d9cc;"></div>
<div class="r" style="left:40px;top:421px;width:33px;height:20px;overflow:hidden"><div class="t" style="left:0;width:34px;text-align:center;top:-0.4px;font-size:14.6px;line-height:19px;color:#217346;transform:scaleX(0.93);transform-origin:50% 0">6</div></div>
<div class="r" style="left:72px;top:421px;width:2px;height:20px;background:#217346;"></div>
<div class="r" style="left:40px;top:441px;width:33px;height:22px;background:#D3F0E0;"></div>
<div class="r" style="left:40px;top:441px;width:33px;height:1px;background:#c3d9cc;"></div>
<div class="r" style="left:40px;top:441px;width:33px;height:22px;overflow:hidden"><div class="t" style="left:0;width:34px;text-align:center;top:1.6px;font-size:14.6px;line-height:19px;color:#217346;transform:scaleX(0.93);transform-origin:50% 0">7</div></div>
<div class="r" style="left:72px;top:441px;width:2px;height:22px;background:#217346;"></div>
<div class="r" style="left:40px;top:463px;width:33px;height:22px;background:#D3F0E0;"></div>
<div class="r" style="left:40px;top:463px;width:33px;height:1px;background:#c3d9cc;"></div>
<div class="r" style="left:40px;top:463px;width:33px;height:22px;overflow:hidden"><div class="t" style="left:0;width:34px;text-align:center;top:1.6px;font-size:14.6px;line-height:19px;color:#217346;transform:scaleX(0.93);transform-origin:50% 0">8</div></div>
<div class="r" style="left:72px;top:463px;width:2px;height:22px;background:#217346;"></div>
<div class="r" style="left:40px;top:485px;width:33px;height:39px;background:#D3F0E0;"></div>
<div class="r" style="left:40px;top:485px;width:33px;height:1px;background:#c3d9cc;"></div>
<div class="r" style="left:40px;top:485px;width:33px;height:39px;overflow:hidden"><div class="t" style="left:0;width:34px;text-align:center;top:18.6px;font-size:14.6px;line-height:19px;color:#217346;transform:scaleX(0.93);transform-origin:50% 0">9</div></div>
<div class="r" style="left:72px;top:485px;width:2px;height:39px;background:#217346;"></div>
<div class="r" style="left:40px;top:524px;width:33px;height:39px;background:#D3F0E0;"></div>
<div class="r" style="left:40px;top:524px;width:33px;height:1px;background:#c3d9cc;"></div>
<div class="r" style="left:40px;top:524px;width:33px;height:39px;overflow:hidden"><div class="t" style="left:0;width:34px;text-align:center;top:18.6px;font-size:14.6px;line-height:19px;color:#217346;transform:scaleX(0.93);transform-origin:50% 0">10</div></div>
<div class="r" style="left:72px;top:524px;width:2px;height:39px;background:#217346;"></div>
<div class="r" style="left:40px;top:563px;width:33px;height:22px;background:#D3F0E0;"></div>
<div class="r" style="left:40px;top:563px;width:33px;height:1px;background:#c3d9cc;"></div>
<div class="r" style="left:40px;top:563px;width:33px;height:22px;overflow:hidden"><div class="t" style="left:0;width:34px;text-align:center;top:1.6px;font-size:14.6px;line-height:19px;color:#217346;transform:scaleX(0.93);transform-origin:50% 0">11</div></div>
<div class="r" style="left:72px;top:563px;width:2px;height:22px;background:#217346;"></div>
<div class="r" style="left:40px;top:585px;width:33px;height:22px;background:#D3F0E0;"></div>
<div class="r" style="left:40px;top:585px;width:33px;height:1px;background:#c3d9cc;"></div>
<div class="r" style="left:40px;top:585px;width:33px;height:22px;overflow:hidden"><div class="t" style="left:0;width:34px;text-align:center;top:1.6px;font-size:14.6px;line-height:19px;color:#217346;transform:scaleX(0.93);transform-origin:50% 0">12</div></div>
<div class="r" style="left:72px;top:585px;width:2px;height:22px;background:#217346;"></div>
<div class="r" style="left:40px;top:607px;width:33px;height:20px;background:#D3F0E0;"></div>
<div class="r" style="left:40px;top:607px;width:33px;height:1px;background:#c3d9cc;"></div>
<div class="r" style="left:40px;top:607px;width:33px;height:20px;overflow:hidden"><div class="t" style="left:0;width:34px;text-align:center;top:-0.4px;font-size:14.6px;line-height:19px;color:#217346;transform:scaleX(0.93);transform-origin:50% 0">13</div></div>
<div class="r" style="left:72px;top:607px;width:2px;height:20px;background:#217346;"></div>
<div class="r" style="left:40px;top:627px;width:33px;height:22px;background:#D3F0E0;"></div>
<div class="r" style="left:40px;top:627px;width:33px;height:1px;background:#c3d9cc;"></div>
<div class="r" style="left:40px;top:627px;width:33px;height:22px;overflow:hidden"><div class="t" style="left:0;width:34px;text-align:center;top:1.6px;font-size:14.6px;line-height:19px;color:#217346;transform:scaleX(0.93);transform-origin:50% 0">14</div></div>
<div class="r" style="left:72px;top:627px;width:2px;height:22px;background:#217346;"></div>
<div class="r" style="left:40px;top:649px;width:33px;height:22px;background:#EFEFEF;"></div>
<div class="r" style="left:40px;top:649px;width:33px;height:1px;background:#B5B5B5;"></div>
<div class="r" style="left:40px;top:649px;width:33px;height:22px;overflow:hidden"><div class="t" style="left:0;width:34px;text-align:center;top:1.6px;font-size:14.6px;line-height:19px;color:#111;transform:scaleX(0.93);transform-origin:50% 0">15</div></div>
<div class="r" style="left:73px;top:649px;width:1px;height:22px;background:#B5B5B5;"></div>
<div class="r" style="left:40px;top:671px;width:33px;height:22px;background:#EFEFEF;"></div>
<div class="r" style="left:40px;top:671px;width:33px;height:1px;background:#B5B5B5;"></div>
<div class="r" style="left:40px;top:671px;width:33px;height:22px;overflow:hidden"><div class="t" style="left:0;width:34px;text-align:center;top:1.6px;font-size:14.6px;line-height:19px;color:#111;transform:scaleX(0.93);transform-origin:50% 0">16</div></div>
<div class="r" style="left:73px;top:671px;width:1px;height:22px;background:#B5B5B5;"></div>
<div class="r" style="left:40px;top:693px;width:33px;height:22px;background:#EFEFEF;"></div>
<div class="r" style="left:40px;top:693px;width:33px;height:1px;background:#B5B5B5;"></div>
<div class="r" style="left:40px;top:693px;width:33px;height:22px;overflow:hidden"><div class="t" style="left:0;width:34px;text-align:center;top:1.6px;font-size:14.6px;line-height:19px;color:#111;transform:scaleX(0.93);transform-origin:50% 0">17</div></div>
<div class="r" style="left:73px;top:693px;width:1px;height:22px;background:#B5B5B5;"></div>
<div class="r" style="left:40px;top:715px;width:33px;height:20px;background:#EFEFEF;"></div>
<div class="r" style="left:40px;top:715px;width:33px;height:1px;background:#B5B5B5;"></div>
<div class="r" style="left:40px;top:715px;width:33px;height:20px;overflow:hidden"><div class="t" style="left:0;width:34px;text-align:center;top:-0.4px;font-size:14.6px;line-height:19px;color:#111;transform:scaleX(0.93);transform-origin:50% 0">18</div></div>
<div class="r" style="left:73px;top:715px;width:1px;height:20px;background:#B5B5B5;"></div>
<div class="r" style="left:40px;top:735px;width:33px;height:3px;background:#EFEFEF;"></div>
<div class="r" style="left:40px;top:735px;width:33px;height:1px;background:#B5B5B5;"></div>
<div class="r" style="left:40px;top:735px;width:33px;height:3px;overflow:hidden"><div class="t" style="left:0;width:34px;text-align:center;top:-17.4px;font-size:14.6px;line-height:19px;color:#111;transform:scaleX(0.93);transform-origin:50% 0">19</div></div>
<div class="r" style="left:73px;top:735px;width:1px;height:3px;background:#B5B5B5;"></div>
<div class="r" style="left:40px;top:649px;width:34px;height:1px;background:#B5B5B5;"></div>
<div class="t" style="left:147.0px;top:343.9px;font-size:13.3px;line-height:17px;color:#000;font-weight:normal;">Contoso Inc.</div>
<div class="r" style="left:144px;top:386px;width:581px;height:25px;background:#30549A;"></div>
<div class="t" style="left:147.3px;top:388.8px;font-size:13.1px;line-height:17px;color:#fff;font-weight:bold;">Questionnaire</div>
<div class="t" style="left:263.3px;top:388.8px;font-size:13.1px;line-height:17px;color:#fff;font-weight:bold;">Description</div>
<div class="t" style="left:486.2px;top:388.8px;font-size:13.1px;line-height:17px;color:#fff;font-weight:bold;">Type of questionnaire</div>
<div class="t" style="left:665.3px;top:388.8px;font-size:13.1px;line-height:17px;color:#fff;font-weight:bold;">Question order</div>
<div class="r" style="left:260px;top:414px;width:465px;height:7px;background:#C8C8C8;"></div>
<div class="r" style="left:145px;top:421px;width:580px;height:21px;background:#A6A6A6;"></div>
<div class="r" style="left:145px;top:442px;width:580px;height:185px;background:#C8C8C8;"></div>
<div class="r" style="left:145px;top:627px;width:580px;height:21px;background:#A6A6A6;"></div>
<div class="t" style="left:147.5px;top:423.7px;font-size:13.3px;line-height:17px;color:#000;font-weight:normal;">Exam</div>
<div class="t" style="left:263.3px;top:423.7px;font-size:13.3px;line-height:17px;color:#000;font-weight:normal;">Examination</div>
<div class="t" style="left:486.2px;top:423.7px;font-size:13.3px;line-height:17px;color:#000;font-weight:normal;">Course</div>
<div class="t" style="left:665.3px;top:423.7px;font-size:13.3px;line-height:17px;color:#000;font-weight:normal;">Sequential</div>
<div class="t" style="left:147.5px;top:443.7px;font-size:12.9px;line-height:17px;color:#000;font-weight:bold;transform:scaleX(0.9705);transform-origin:0 0;">Result group</div>
<div class="t" style="left:263.3px;top:444.3px;font-size:12.6px;line-height:16px;color:#000;font-weight:bold;">Description</div>
<div class="t" style="left:0;width:659.6px;text-align:right;top:443.7px;font-size:12.9px;line-height:17px;color:#000;font-weight:bold;transform:scaleX(1.0182);transform-origin:100% 0;">Max. number of points</div>
<div class="t" style="left:147.5px;top:465.5px;font-size:13.3px;line-height:17px;color:#000;font-weight:normal;">ExamGroup</div>
<div class="t" style="left:263.3px;top:465.5px;font-size:13.3px;line-height:17px;color:#000;font-weight:normal;">Course examination</div>
<div class="t" style="left:0;width:659.6px;text-align:right;top:465.5px;font-size:13.3px;line-height:17px;color:#000;font-weight:normal;">4.50</div>
<div class="t" style="left:263.3px;top:487.8px;font-size:12.9px;line-height:17px;color:#000;font-weight:bold;">Question</div>
<div class="t" style="left:0;width:659.6px;text-align:right;top:487.8px;font-size:12.9px;line-height:17px;color:#000;font-weight:bold;transform:scaleX(1.0052);transform-origin:100% 0;">Sequence number</div>
<div class="t" style="left:665.3px;top:487.8px;font-size:12.9px;line-height:17px;color:#000;font-weight:bold;">Text</div>
<div class="t" style="left:263.3px;top:526.5px;font-size:13.3px;line-height:17px;color:#000;font-weight:normal;">XXXXXX</div>
<div class="t" style="left:0;width:659.6px;text-align:right;top:526.5px;font-size:13.3px;line-height:17px;color:#000;font-weight:normal;">1</div>
<div class="t" style="left:665.3px;top:526.5px;font-size:13.3px;line-height:17px;color:#000;font-weight:normal;">Should you do your</div>
<div class="t" style="left:665.3px;top:546.7px;font-size:13.3px;line-height:17px;color:#000;font-weight:normal;">the office</div>
<div class="t" style="left:486.2px;top:587.0px;font-size:12.9px;line-height:17px;color:#000;font-weight:bold;transform:scaleX(1.0052);transform-origin:0 0;">Sequence number</div>
<div class="t" style="left:665.3px;top:587.0px;font-size:12.9px;line-height:17px;color:#000;font-weight:bold;">Answer</div>
<div class="t" style="left:486.2px;top:608.9px;font-size:13.3px;line-height:17px;color:#000;font-weight:normal;">1</div>
<div class="t" style="left:665.3px;top:608.9px;font-size:13.3px;line-height:17px;color:#000;font-weight:normal;">Never required</div>
<div class="r" style="left:143px;top:411px;width:582px;height:2px;background:#217346;"></div>
<div class="r" style="left:143px;top:411px;width:2px;height:240px;background:#217346;"></div>
<div class="r" style="left:143px;top:649px;width:582px;height:2px;background:#217346;"></div>
<div class="r" style="left:144px;top:646px;width:6px;height:6px;background:#217346;outline:1px solid #fff"></div>
<div class="r" style="left:1px;top:738px;width:1413px;height:28px;background:#E6E6E6;"></div>
<div class="r" style="left:1px;top:738px;width:1413px;height:1px;background:#C6C6C6;"></div>
<svg class="r" style="left:27px;top:747px" width="6" height="10" viewBox="0 0 6 10"><path d="M5 0.5V8.5L1 4.5z" fill="#c4c4c4"/></svg>
<svg class="r" style="left:56px;top:747px" width="6" height="10" viewBox="0 0 6 10"><path d="M1 0.5V8.5L5 4.5z" fill="#c4c4c4"/></svg>
<div class="r" style="left:101px;top:738px;width:65px;height:26px;background:#fff;border-left:1px solid #C6C6C6;border-right:1px solid #C6C6C6;box-sizing:border-box"></div>
<div class="r" style="left:101px;top:761px;width:65px;height:2px;background:#217346;"></div>
<div class="t" style="left:113.3px;top:743.7px;font-size:12.1px;line-height:16px;color:#217346;font-weight:bold;">Sheet1</div>
<svg class="r" style="left:198px;top:743px" width="18" height="18" viewBox="0 0 18 18"><circle cx="9" cy="9" r="7.6" fill="none" stroke="#777" stroke-width="1.1"/><path d="M9 4.5v9M4.5 9h9" stroke="#666" stroke-width="1.5"/></svg>
<div class="r" style="left:1px;top:766px;width:1413px;height:22px;background:#F0F0F0;"></div>
<div class="r" style="left:1px;top:766px;width:1413px;height:1px;background:#D4D4D4;"></div>
<div class="t" style="left:8.6px;top:769.4px;font-size:10.5px;line-height:14px;color:#444;font-weight:normal;transform:scaleX(0.9984);transform-origin:0 0;">Ready</div>
<div class="t" style="left:59.0px;top:769.2px;font-size:10.9px;line-height:14px;color:#444;font-weight:normal;transform:scaleX(1.0037);transform-origin:0 0;">Page: 1 of 1</div>
<div class="r" style="left:1149px;top:782px;width:38px;height:6px;background:#C6C6C6;"></div>
<div class="r" style="left:1123px;top:782px;width:13px;height:2px;background:#6a7a8a;"></div>
<div class="r" style="left:1161px;top:782px;width:13px;height:2px;background:#6a7a8a;"></div>
<div class="r" style="left:1199px;top:782px;width:13px;height:2px;background:#6a7a8a;"></div>
<div class="r" style="left:0px;top:788px;width:1415px;height:1px;background:#8a8a8a;"></div>
<div class="r" style="left:723px;top:140px;width:690px;height:642px;background:#F0F0F0;border:1px solid #2083D8;box-sizing:border-box"></div>
<div class="r" style="left:724px;top:141px;width:688px;height:33px;background:#fff;"></div>
<div class="t" style="left:732.7px;top:147.3px;font-size:17.12px;line-height:22px;color:#000;font-weight:normal;">Name Manager</div>
<div class="t" style="left:1332.2px;top:148.0px;font-size:13.5px;line-height:18px;color:#000;font-weight:normal;">?</div>
<svg class="r" style="left:1380px;top:151px" width="13" height="13" viewBox="0 0 13 13"><path d="M1 1l11 11M12 1L1 12" stroke="#000" stroke-width="1.1"/></svg>
<div class="r" style="left:730px;top:181px;width:74px;height:22px;background:#E1E1E1;border:1px solid #ADADAD;box-sizing:border-box"></div>
<div class="r" style="left:814px;top:181px;width:74px;height:22px;background:#E1E1E1;border:1px solid #ADADAD;box-sizing:border-box"></div>
<div class="r" style="left:898px;top:181px;width:74px;height:22px;background:#E1E1E1;border:1px solid #ADADAD;box-sizing:border-box"></div>
<div class="r" style="left:1332px;top:182px;width:73px;height:21px;background:#E1E1E1;border:1px solid #ADADAD;box-sizing:border-box"></div>
<div class="t" style="left:752.0px;top:184.5px;font-size:11.6px;line-height:15px;color:#000;font-weight:normal;">New...</div>
<div class="r" style="left:752px;top:197px;width:8px;height:1px;background:#000;"></div>
<div class="t" style="left:836.0px;top:184.5px;font-size:11.6px;line-height:15px;color:#000;font-weight:normal;">Edit...</div>
<div class="r" style="left:836px;top:197px;width:7px;height:1px;background:#000;"></div>
<div class="t" style="left:918.5px;top:184.5px;font-size:11.6px;line-height:15px;color:#000;font-weight:normal;">Delete</div>
<div class="r" style="left:918.5px;top:197px;width:8.5px;height:1px;background:#000;"></div>
<div class="t" style="left:1350.0px;top:185.0px;font-size:11.6px;line-height:15px;color:#000;font-weight:normal;">Filter</div>
<div class="r" style="left:1350px;top:197.5px;width:6px;height:1px;background:#000;"></div>
<svg class="r" style="left:1379px;top:191px" width="6" height="4" viewBox="0 0 6 4"><path d="M0 0.5h6l-3 3z" fill="#000"/></svg>
<div class="r" style="left:730px;top:207px;width:676px;height:494px;background:#fff;border:1px solid #828790;box-sizing:border-box"></div>
<div class="r" style="left:886px;top:209px;width:1px;height:23px;background:#E5E5E5;"></div>
<div class="r" style="left:1173px;top:209px;width:1px;height:23px;background:#E5E5E5;"></div>
<div class="r" style="left:1293px;top:209px;width:1px;height:23px;background:#E5E5E5;"></div>
<div class="r" style="left:1400px;top:209px;width:1px;height:23px;background:#E5E5E5;"></div>
<div class="t" style="left:738.6px;top:213.6px;font-size:11.3px;line-height:15px;color:#000;font-weight:normal;">Name</div>
<div class="t" style="left:893.0px;top:213.6px;font-size:11.3px;line-height:15px;color:#000;font-weight:normal;">Value</div>
<div class="t" style="left:1180.2px;top:213.6px;font-size:11.3px;line-height:15px;color:#000;font-weight:normal;">Refers To</div>
<div class="t" style="left:1300.4px;top:213.6px;font-size:11.3px;line-height:15px;color:#000;font-weight:normal;">Scope</div>
<svg class="r" style="left:735px;top:235px" width="16" height="12" viewBox="0 0 16 12"><path d="M4.5 1.5H13.5Q14.5 1.5 14.5 2.5V8.5Q14.5 9.5 13.5 9.5H4.5L2.5 7.5V3.5z" fill="#fbfae2" stroke="#9c9648" stroke-width="1"/><path d="M0.5 5.5H2.5" stroke="#9c9648" stroke-width="1"/><path d="M7 3.5h5.5M7 5.5h5.5M7 7.5h5.5" stroke="#9c9648" stroke-width="1" opacity="0.75"/><rect x="4" y="5" width="1" height="1" fill="#9c9648" opacity="0.7"/></svg>
<div class="t" style="left:754.2px;top:234.9px;font-size:11.3px;line-height:15px;color:#000;font-weight:normal;">Active</div>
<div class="t" style="left:893.0px;top:234.9px;font-size:11.3px;line-height:15px;color:#000;font-weight:normal;">Yes</div>
<div class="t" style="left:1180.5px;top:234.7px;font-size:11.0px;line-height:14px;color:#000;font-weight:normal;">=Sheet1!$E$6</div>
<div class="t" style="left:1300.2px;top:234.9px;font-size:11.3px;line-height:15px;color:#000;font-weight:normal;transform:scaleX(1.0817);transform-origin:0 0;">Workbook</div>
<svg class="r" style="left:735px;top:252px" width="16" height="12" viewBox="0 0 16 12"><path d="M4.5 1.5H13.5Q14.5 1.5 14.5 2.5V8.5Q14.5 9.5 13.5 9.5H4.5L2.5 7.5V3.5z" fill="#fbfae2" stroke="#9c9648" stroke-width="1"/><path d="M0.5 5.5H2.5" stroke="#9c9648" stroke-width="1"/><path d="M7 3.5h5.5M7 5.5h5.5M7 7.5h5.5" stroke="#9c9648" stroke-width="1" opacity="0.75"/><rect x="4" y="5" width="1" height="1" fill="#9c9648" opacity="0.7"/></svg>
<div class="t" style="left:754.2px;top:251.9px;font-size:11.3px;line-height:15px;color:#000;font-weight:normal;">Answer</div>
<div class="t" style="left:893.0px;top:251.9px;font-size:11.3px;line-height:15px;color:#000;font-weight:normal;transform:scaleX(0.9874);transform-origin:0 0;">{&quot;&quot;,&quot;&quot;,&quot;1&quot;,&quot;Never required&quot;,&quot;0.5&quot;,&quot;No&quot;,&quot;&quot;,&quot;&quot;,&quot;&quot;,&quot;&quot;,&quot;&quot;,&quot;&quot;,&quot;&quot;,&quot;&quot;...</div>
<div class="t" style="left:1180.5px;top:251.7px;font-size:11.0px;line-height:14px;color:#000;font-weight:normal;">=Sheet1!$13:$13</div>
<div class="t" style="left:1300.2px;top:251.9px;font-size:11.3px;line-height:15px;color:#000;font-weight:normal;transform:scaleX(1.0817);transform-origin:0 0;">Workbook</div>
<svg class="r" style="left:735px;top:269px" width="16" height="12" viewBox="0 0 16 12"><path d="M4.5 1.5H13.5Q14.5 1.5 14.5 2.5V8.5Q14.5 9.5 13.5 9.5H4.5L2.5 7.5V3.5z" fill="#fbfae2" stroke="#9c9648" stroke-width="1"/><path d="M0.5 5.5H2.5" stroke="#9c9648" stroke-width="1"/><path d="M7 3.5h5.5M7 5.5h5.5M7 7.5h5.5" stroke="#9c9648" stroke-width="1" opacity="0.75"/><rect x="4" y="5" width="1" height="1" fill="#9c9648" opacity="0.7"/></svg>
<div class="t" style="left:754.2px;top:268.9px;font-size:11.3px;line-height:15px;color:#000;font-weight:normal;">Code</div>
<div class="t" style="left:893.0px;top:268.9px;font-size:11.3px;line-height:15px;color:#000;font-weight:normal;">Exam</div>
<div class="t" style="left:1180.5px;top:268.7px;font-size:11.0px;line-height:14px;color:#000;font-weight:normal;">=Sheet1!$A$6</div>
<div class="t" style="left:1300.2px;top:268.9px;font-size:11.3px;line-height:15px;color:#000;font-weight:normal;transform:scaleX(1.0817);transform-origin:0 0;">Workbook</div>
<svg class="r" style="left:735px;top:286px" width="16" height="12" viewBox="0 0 16 12"><path d="M4.5 1.5H13.5Q14.5 1.5 14.5 2.5V8.5Q14.5 9.5 13.5 9.5H4.5L2.5 7.5V3.5z" fill="#fbfae2" stroke="#9c9648" stroke-width="1"/><path d="M0.5 5.5H2.5" stroke="#9c9648" stroke-width="1"/><path d="M7 3.5h5.5M7 5.5h5.5M7 7.5h5.5" stroke="#9c9648" stroke-width="1" opacity="0.75"/><rect x="4" y="5" width="1" height="1" fill="#9c9648" opacity="0.7"/></svg>
<div class="t" style="left:754.2px;top:285.9px;font-size:11.3px;line-height:15px;color:#000;font-weight:normal;">Code_</div>
<div class="t" style="left:893.0px;top:285.9px;font-size:11.3px;line-height:15px;color:#000;font-weight:normal;">ExamGroup</div>
<div class="t" style="left:1180.5px;top:285.7px;font-size:11.0px;line-height:14px;color:#000;font-weight:normal;">=Sheet1!$A$8</div>
<div class="t" style="left:1300.2px;top:285.9px;font-size:11.3px;line-height:15px;color:#000;font-weight:normal;transform:scaleX(1.0817);transform-origin:0 0;">Workbook</div>
<svg class="r" style="left:735px;top:303px" width="16" height="12" viewBox="0 0 16 12"><path d="M4.5 1.5H13.5Q14.5 1.5 14.5 2.5V8.5Q14.5 9.5 13.5 9.5H4.5L2.5 7.5V3.5z" fill="#fbfae2" stroke="#9c9648" stroke-width="1"/><path d="M0.5 5.5H2.5" stroke="#9c9648" stroke-width="1"/><path d="M7 3.5h5.5M7 5.5h5.5M7 7.5h5.5" stroke="#9c9648" stroke-width="1" opacity="0.75"/><rect x="4" y="5" width="1" height="1" fill="#9c9648" opacity="0.7"/></svg>
<div class="t" style="left:754.2px;top:302.9px;font-size:11.3px;line-height:15px;color:#000;font-weight:normal;">CollectionSequenceNu...</div>
<div class="t" style="left:893.0px;top:302.9px;font-size:11.3px;line-height:15px;color:#000;font-weight:normal;">0</div>
<div class="t" style="left:1180.5px;top:302.7px;font-size:11.0px;line-height:14px;color:#000;font-weight:normal;">=Sheet1!$G$10</div>
<div class="t" style="left:1300.2px;top:302.9px;font-size:11.3px;line-height:15px;color:#000;font-weight:normal;transform:scaleX(1.0817);transform-origin:0 0;">Workbook</div>
<svg class="r" style="left:735px;top:320px" width="16" height="12" viewBox="0 0 16 12"><path d="M4.5 1.5H13.5Q14.5 1.5 14.5 2.5V8.5Q14.5 9.5 13.5 9.5H4.5L2.5 7.5V3.5z" fill="#fbfae2" stroke="#9c9648" stroke-width="1"/><path d="M0.5 5.5H2.5" stroke="#9c9648" stroke-width="1"/><path d="M7 3.5h5.5M7 5.5h5.5M7 7.5h5.5" stroke="#9c9648" stroke-width="1" opacity="0.75"/><rect x="4" y="5" width="1" height="1" fill="#9c9648" opacity="0.7"/></svg>
<div class="t" style="left:754.2px;top:319.9px;font-size:11.3px;line-height:15px;color:#000;font-weight:normal;">CompanyName</div>
<div class="t" style="left:893.0px;top:319.9px;font-size:11.3px;line-height:15px;color:#000;font-weight:normal;">Contoso Inc.</div>
<div class="t" style="left:1180.5px;top:319.7px;font-size:11.0px;line-height:14px;color:#000;font-weight:normal;">=Sheet1!$A$2</div>
<div class="t" style="left:1300.2px;top:319.9px;font-size:11.3px;line-height:15px;color:#000;font-weight:normal;transform:scaleX(1.0817);transform-origin:0 0;">Workbook</div>
<svg class="r" style="left:735px;top:337px" width="16" height="12" viewBox="0 0 16 12"><path d="M4.5 1.5H13.5Q14.5 1.5 14.5 2.5V8.5Q14.5 9.5 13.5 9.5H4.5L2.5 7.5V3.5z" fill="#fbfae2" stroke="#9c9648" stroke-width="1"/><path d="M0.5 5.5H2.5" stroke="#9c9648" stroke-width="1"/><path d="M7 3.5h5.5M7 5.5h5.5M7 7.5h5.5" stroke="#9c9648" stroke-width="1" opacity="0.75"/><rect x="4" y="5" width="1" height="1" fill="#9c9648" opacity="0.7"/></svg>
<div class="t" style="left:754.2px;top:336.9px;font-size:11.3px;line-height:15px;color:#000;font-weight:normal;">CorrectAnswer</div>
<div class="t" style="left:893.0px;top:336.9px;font-size:11.3px;line-height:15px;color:#000;font-weight:normal;">No</div>
<div class="t" style="left:1180.5px;top:336.7px;font-size:11.0px;line-height:14px;color:#000;font-weight:normal;">=Sheet1!$F$13</div>
<div class="t" style="left:1300.2px;top:336.9px;font-size:11.3px;line-height:15px;color:#000;font-weight:normal;transform:scaleX(1.0817);transform-origin:0 0;">Workbook</div>
<svg class="r" style="left:735px;top:354px" width="16" height="12" viewBox="0 0 16 12"><path d="M4.5 1.5H13.5Q14.5 1.5 14.5 2.5V8.5Q14.5 9.5 13.5 9.5H4.5L2.5 7.5V3.5z" fill="#fbfae2" stroke="#9c9648" stroke-width="1"/><path d="M0.5 5.5H2.5" stroke="#9c9648" stroke-width="1"/><path d="M7 3.5h5.5M7 5.5h5.5M7 7.5h5.5" stroke="#9c9648" stroke-width="1" opacity="0.75"/><rect x="4" y="5" width="1" height="1" fill="#9c9648" opacity="0.7"/></svg>
<div class="t" style="left:754.2px;top:353.9px;font-size:11.3px;line-height:15px;color:#000;font-weight:normal;">Description</div>
<div class="t" style="left:893.0px;top:353.9px;font-size:11.3px;line-height:15px;color:#000;font-weight:normal;">Examination</div>
<div class="t" style="left:1180.5px;top:353.7px;font-size:11.0px;line-height:14px;color:#000;font-weight:normal;">=Sheet1!$B$6</div>
<div class="t" style="left:1300.2px;top:353.9px;font-size:11.3px;line-height:15px;color:#000;font-weight:normal;transform:scaleX(1.0817);transform-origin:0 0;">Workbook</div>
<svg class="r" style="left:735px;top:371px" width="16" height="12" viewBox="0 0 16 12"><path d="M4.5 1.5H13.5Q14.5 1.5 14.5 2.5V8.5Q14.5 9.5 13.5 9.5H4.5L2.5 7.5V3.5z" fill="#fbfae2" stroke="#9c9648" stroke-width="1"/><path d="M0.5 5.5H2.5" stroke="#9c9648" stroke-width="1"/><path d="M7 3.5h5.5M7 5.5h5.5M7 7.5h5.5" stroke="#9c9648" stroke-width="1" opacity="0.75"/><rect x="4" y="5" width="1" height="1" fill="#9c9648" opacity="0.7"/></svg>
<div class="t" style="left:754.2px;top:370.9px;font-size:11.3px;line-height:15px;color:#000;font-weight:normal;">Description_</div>
<div class="t" style="left:893.0px;top:370.9px;font-size:11.3px;line-height:15px;color:#000;font-weight:normal;">Course examination</div>
<div class="t" style="left:1180.5px;top:370.7px;font-size:11.0px;line-height:14px;color:#000;font-weight:normal;">=Sheet1!$B$8</div>
<div class="t" style="left:1300.2px;top:370.9px;font-size:11.3px;line-height:15px;color:#000;font-weight:normal;transform:scaleX(1.0817);transform-origin:0 0;">Workbook</div>
<svg class="r" style="left:735px;top:388px" width="16" height="12" viewBox="0 0 16 12"><path d="M4.5 1.5H13.5Q14.5 1.5 14.5 2.5V8.5Q14.5 9.5 13.5 9.5H4.5L2.5 7.5V3.5z" fill="#fbfae2" stroke="#9c9648" stroke-width="1"/><path d="M0.5 5.5H2.5" stroke="#9c9648" stroke-width="1"/><path d="M7 3.5h5.5M7 5.5h5.5M7 7.5h5.5" stroke="#9c9648" stroke-width="1" opacity="0.75"/><rect x="4" y="5" width="1" height="1" fill="#9c9648" opacity="0.7"/></svg>
<div class="t" style="left:754.2px;top:387.9px;font-size:11.3px;line-height:15px;color:#000;font-weight:normal;">Id</div>
<div class="t" style="left:893.0px;top:387.9px;font-size:11.3px;line-height:15px;color:#000;font-weight:normal;transform:scaleX(0.7960);transform-origin:0 0;">XXXXXX</div>
<div class="t" style="left:1180.5px;top:387.7px;font-size:11.0px;line-height:14px;color:#000;font-weight:normal;">=Sheet1!$B$10</div>
<div class="t" style="left:1300.2px;top:387.9px;font-size:11.3px;line-height:15px;color:#000;font-weight:normal;transform:scaleX(1.0817);transform-origin:0 0;">Workbook</div>
<svg class="r" style="left:735px;top:405px" width="16" height="12" viewBox="0 0 16 12"><path d="M4.5 1.5H13.5Q14.5 1.5 14.5 2.5V8.5Q14.5 9.5 13.5 9.5H4.5L2.5 7.5V3.5z" fill="#fbfae2" stroke="#9c9648" stroke-width="1"/><path d="M0.5 5.5H2.5" stroke="#9c9648" stroke-width="1"/><path d="M7 3.5h5.5M7 5.5h5.5M7 7.5h5.5" stroke="#9c9648" stroke-width="1" opacity="0.75"/><rect x="4" y="5" width="1" height="1" fill="#9c9648" opacity="0.7"/></svg>
<div class="t" style="left:754.2px;top:404.9px;font-size:11.3px;line-height:15px;color:#000;font-weight:normal;">MaxNumberOfPoints</div>
<div class="t" style="left:893.0px;top:404.9px;font-size:11.3px;line-height:15px;color:#000;font-weight:normal;">4.50</div>
<div class="t" style="left:1180.5px;top:404.7px;font-size:11.0px;line-height:14px;color:#000;font-weight:normal;">=Sheet1!$C$8</div>
<div class="t" style="left:1300.2px;top:404.9px;font-size:11.3px;line-height:15px;color:#000;font-weight:normal;transform:scaleX(1.0817);transform-origin:0 0;">Workbook</div>
<svg class="r" style="left:735px;top:422px" width="16" height="12" viewBox="0 0 16 12"><path d="M4.5 1.5H13.5Q14.5 1.5 14.5 2.5V8.5Q14.5 9.5 13.5 9.5H4.5L2.5 7.5V3.5z" fill="#fbfae2" stroke="#9c9648" stroke-width="1"/><path d="M0.5 5.5H2.5" stroke="#9c9648" stroke-width="1"/><path d="M7 3.5h5.5M7 5.5h5.5M7 7.5h5.5" stroke="#9c9648" stroke-width="1" opacity="0.75"/><rect x="4" y="5" width="1" height="1" fill="#9c9648" opacity="0.7"/></svg>
<div class="t" style="left:754.2px;top:421.9px;font-size:11.3px;line-height:15px;color:#000;font-weight:normal;">MustBeCompleted</div>
<div class="t" style="left:893.0px;top:421.9px;font-size:11.3px;line-height:15px;color:#000;font-weight:normal;">Yes</div>
<div class="t" style="left:1180.5px;top:421.7px;font-size:11.0px;line-height:14px;color:#000;font-weight:normal;">=Sheet1!$E$10</div>
<div class="t" style="left:1300.2px;top:421.9px;font-size:11.3px;line-height:15px;color:#000;font-weight:normal;transform:scaleX(1.0817);transform-origin:0 0;">Workbook</div>
<svg class="r" style="left:735px;top:439px" width="16" height="12" viewBox="0 0 16 12"><path d="M4.5 1.5H13.5Q14.5 1.5 14.5 2.5V8.5Q14.5 9.5 13.5 9.5H4.5L2.5 7.5V3.5z" fill="#fbfae2" stroke="#9c9648" stroke-width="1"/><path d="M0.5 5.5H2.5" stroke="#9c9648" stroke-width="1"/><path d="M7 3.5h5.5M7 5.5h5.5M7 7.5h5.5" stroke="#9c9648" stroke-width="1" opacity="0.75"/><rect x="4" y="5" width="1" height="1" fill="#9c9648" opacity="0.7"/></svg>
<div class="t" style="left:754.2px;top:438.9px;font-size:11.3px;line-height:15px;color:#000;font-weight:normal;">Points</div>
<div class="t" style="left:893.0px;top:438.9px;font-size:11.3px;line-height:15px;color:#000;font-weight:normal;">0.5</div>
<div class="t" style="left:1180.5px;top:438.7px;font-size:11.0px;line-height:14px;color:#000;font-weight:normal;">=Sheet1!$E$13</div>
<div class="t" style="left:1300.2px;top:438.9px;font-size:11.3px;line-height:15px;color:#000;font-weight:normal;transform:scaleX(1.0817);transform-origin:0 0;">Workbook</div>
<svg class="r" style="left:735px;top:456px" width="16" height="12" viewBox="0 0 16 12"><path d="M4.5 1.5H13.5Q14.5 1.5 14.5 2.5V8.5Q14.5 9.5 13.5 9.5H4.5L2.5 7.5V3.5z" fill="#fbfae2" stroke="#9c9648" stroke-width="1"/><path d="M0.5 5.5H2.5" stroke="#9c9648" stroke-width="1"/><path d="M7 3.5h5.5M7 5.5h5.5M7 7.5h5.5" stroke="#9c9648" stroke-width="1" opacity="0.75"/><rect x="4" y="5" width="1" height="1" fill="#9c9648" opacity="0.7"/></svg>
<div class="t" style="left:754.2px;top:455.9px;font-size:11.3px;line-height:15px;color:#000;font-weight:normal;">PrimaryQuestion</div>
<div class="t" style="left:893.0px;top:455.9px;font-size:11.3px;line-height:15px;color:#000;font-weight:normal;transform:scaleX(0.7960);transform-origin:0 0;">XXXXXX</div>
<div class="t" style="left:1180.5px;top:455.7px;font-size:11.0px;line-height:14px;color:#000;font-weight:normal;">=Sheet1!$F$10</div>
<div class="t" style="left:1300.2px;top:455.9px;font-size:11.3px;line-height:15px;color:#000;font-weight:normal;transform:scaleX(1.0817);transform-origin:0 0;">Workbook</div>
<svg class="r" style="left:735px;top:473px" width="16" height="12" viewBox="0 0 16 12"><path d="M4.5 1.5H13.5Q14.5 1.5 14.5 2.5V8.5Q14.5 9.5 13.5 9.5H4.5L2.5 7.5V3.5z" fill="#fbfae2" stroke="#9c9648" stroke-width="1"/><path d="M0.5 5.5H2.5" stroke="#9c9648" stroke-width="1"/><path d="M7 3.5h5.5M7 5.5h5.5M7 7.5h5.5" stroke="#9c9648" stroke-width="1" opacity="0.75"/><rect x="4" y="5" width="1" height="1" fill="#9c9648" opacity="0.7"/></svg>
<div class="t" style="left:754.2px;top:472.9px;font-size:11.3px;line-height:15px;color:#000;font-weight:normal;">Print_Titles</div>
<div class="t" style="left:893.0px;top:472.9px;font-size:11.3px;line-height:15px;color:#000;font-weight:normal;transform:scaleX(1.0770);transform-origin:0 0;">{&quot;Questionnaires&quot;,&quot;&quot;,&quot;&quot;,&quot;&quot;,&quot;&quot;,&quot;&quot;,&quot;&quot;,&quot;&quot;,&quot;&quot;,&quot;&quot;,&quot;&quot;,&quot;&quot;,&quot;&quot;,&quot;&quot;,&quot;&quot;...</div>
<div class="t" style="left:1180.5px;top:472.7px;font-size:11.0px;line-height:14px;color:#000;font-weight:normal;">=Sheet1!$1:$4</div>
<div class="t" style="left:1300.2px;top:472.9px;font-size:11.3px;line-height:15px;color:#000;font-weight:normal;transform:scaleX(1.0192);transform-origin:0 0;">Sheet1</div>
<svg class="r" style="left:735px;top:490px" width="16" height="12" viewBox="0 0 16 12"><path d="M4.5 1.5H13.5Q14.5 1.5 14.5 2.5V8.5Q14.5 9.5 13.5 9.5H4.5L2.5 7.5V3.5z" fill="#fbfae2" stroke="#9c9648" stroke-width="1"/><path d="M0.5 5.5H2.5" stroke="#9c9648" stroke-width="1"/><path d="M7 3.5h5.5M7 5.5h5.5M7 7.5h5.5" stroke="#9c9648" stroke-width="1" opacity="0.75"/><rect x="4" y="5" width="1" height="1" fill="#9c9648" opacity="0.7"/></svg>
<div class="t" style="left:754.2px;top:489.9px;font-size:11.3px;line-height:15px;color:#000;font-weight:normal;">Question</div>
<div class="t" style="left:893.0px;top:489.9px;font-size:11.3px;line-height:15px;color:#000;font-weight:normal;transform:scaleX(0.9958);transform-origin:0 0;">{&quot;&quot;,&quot;Question&quot;,&quot;Sequence number&quot;,&quot;Text&quot;,&quot;Must be c...</div>
<div class="t" style="left:1180.5px;top:489.7px;font-size:11.0px;line-height:14px;color:#000;font-weight:normal;">=Sheet1!$9:$13</div>
<div class="t" style="left:1300.2px;top:489.9px;font-size:11.3px;line-height:15px;color:#000;font-weight:normal;transform:scaleX(1.0817);transform-origin:0 0;">Workbook</div>
<div class="r" style="left:752px;top:505px;width:653px;height:17px;background:#3399FF;"></div>
<svg class="r" style="left:735px;top:507px" width="16" height="12" viewBox="0 0 16 12"><path d="M4.5 1.5H13.5Q14.5 1.5 14.5 2.5V8.5Q14.5 9.5 13.5 9.5H4.5L2.5 7.5V3.5z" fill="#d5e8fa" stroke="#6b93bb" stroke-width="1"/><path d="M0.5 5.5H2.5" stroke="#6b93bb" stroke-width="1"/><path d="M7 3.5h5.5M7 5.5h5.5M7 7.5h5.5" stroke="#6b93bb" stroke-width="1" opacity="0.75"/><rect x="4" y="5" width="1" height="1" fill="#6b93bb" opacity="0.7"/></svg>
<div class="t" style="left:754.2px;top:506.9px;font-size:11.3px;line-height:15px;color:#fff;font-weight:normal;">Questionnaire</div>
<div class="t" style="left:893.0px;top:506.9px;font-size:11.3px;line-height:15px;color:#fff;font-weight:normal;transform:scaleX(1.1167);transform-origin:0 0;">{&quot;&quot;,&quot;&quot;,&quot;&quot;,&quot;&quot;,&quot;&quot;,&quot;&quot;,&quot;&quot;,&quot;&quot;,&quot;&quot;,&quot;&quot;,&quot;&quot;,&quot;&quot;,&quot;&quot;,&quot;&quot;,&quot;&quot;,&quot;&quot;,&quot;&quot;,&quot;&quot;,&quot;&quot;,&quot;&quot;,&quot;&quot;...</div>
<div class="t" style="left:1180.5px;top:506.7px;font-size:11.0px;line-height:14px;color:#fff;font-weight:normal;">=Sheet1!$5:$14</div>
<div class="t" style="left:1300.2px;top:506.9px;font-size:11.3px;line-height:15px;color:#fff;font-weight:normal;transform:scaleX(1.0817);transform-origin:0 0;">Workbook</div>
<svg class="r" style="left:735px;top:524px" width="16" height="12" viewBox="0 0 16 12"><path d="M4.5 1.5H13.5Q14.5 1.5 14.5 2.5V8.5Q14.5 9.5 13.5 9.5H4.5L2.5 7.5V3.5z" fill="#fbfae2" stroke="#9c9648" stroke-width="1"/><path d="M0.5 5.5H2.5" stroke="#9c9648" stroke-width="1"/><path d="M7 3.5h5.5M7 5.5h5.5M7 7.5h5.5" stroke="#9c9648" stroke-width="1" opacity="0.75"/><rect x="4" y="5" width="1" height="1" fill="#9c9648" opacity="0.7"/></svg>
<div class="t" style="left:754.2px;top:523.9px;font-size:11.3px;line-height:15px;color:#000;font-weight:normal;">QuestionnaireType</div>
<div class="t" style="left:893.0px;top:523.9px;font-size:11.3px;line-height:15px;color:#000;font-weight:normal;">Course</div>
<div class="t" style="left:1180.5px;top:523.7px;font-size:11.0px;line-height:14px;color:#000;font-weight:normal;">=Sheet1!$C$6</div>
<div class="t" style="left:1300.2px;top:523.9px;font-size:11.3px;line-height:15px;color:#000;font-weight:normal;transform:scaleX(1.0817);transform-origin:0 0;">Workbook</div>
<svg class="r" style="left:735px;top:541px" width="16" height="12" viewBox="0 0 16 12"><path d="M4.5 1.5H13.5Q14.5 1.5 14.5 2.5V8.5Q14.5 9.5 13.5 9.5H4.5L2.5 7.5V3.5z" fill="#fbfae2" stroke="#9c9648" stroke-width="1"/><path d="M0.5 5.5H2.5" stroke="#9c9648" stroke-width="1"/><path d="M7 3.5h5.5M7 5.5h5.5M7 7.5h5.5" stroke="#9c9648" stroke-width="1" opacity="0.75"/><rect x="4" y="5" width="1" height="1" fill="#9c9648" opacity="0.7"/></svg>
<div class="t" style="left:754.2px;top:540.9px;font-size:11.3px;line-height:15px;color:#000;font-weight:normal;">QuestionOrder</div>
<div class="t" style="left:893.0px;top:540.9px;font-size:11.3px;line-height:15px;color:#000;font-weight:normal;">Sequential</div>
<div class="t" style="left:1180.5px;top:540.7px;font-size:11.0px;line-height:14px;color:#000;font-weight:normal;">=Sheet1!$D$6</div>
<div class="t" style="left:1300.2px;top:540.9px;font-size:11.3px;line-height:15px;color:#000;font-weight:normal;transform:scaleX(1.0817);transform-origin:0 0;">Workbook</div>
<svg class="r" style="left:735px;top:558px" width="16" height="12" viewBox="0 0 16 12"><path d="M4.5 1.5H13.5Q14.5 1.5 14.5 2.5V8.5Q14.5 9.5 13.5 9.5H4.5L2.5 7.5V3.5z" fill="#fbfae2" stroke="#9c9648" stroke-width="1"/><path d="M0.5 5.5H2.5" stroke="#9c9648" stroke-width="1"/><path d="M7 3.5h5.5M7 5.5h5.5M7 7.5h5.5" stroke="#9c9648" stroke-width="1" opacity="0.75"/><rect x="4" y="5" width="1" height="1" fill="#9c9648" opacity="0.7"/></svg>
<div class="t" style="left:754.2px;top:557.9px;font-size:11.3px;line-height:15px;color:#000;font-weight:normal;">ReportTitle</div>
<div class="t" style="left:893.0px;top:557.9px;font-size:11.3px;line-height:15px;color:#000;font-weight:normal;">Questionnaires</div>
<div class="t" style="left:1180.5px;top:557.7px;font-size:11.0px;line-height:14px;color:#000;font-weight:normal;">=Sheet1!$A$1</div>
<div class="t" style="left:1300.2px;top:557.9px;font-size:11.3px;line-height:15px;color:#000;font-weight:normal;transform:scaleX(1.0817);transform-origin:0 0;">Workbook</div>
<svg class="r" style="left:735px;top:575px" width="16" height="12" viewBox="0 0 16 12"><path d="M4.5 1.5H13.5Q14.5 1.5 14.5 2.5V8.5Q14.5 9.5 13.5 9.5H4.5L2.5 7.5V3.5z" fill="#fbfae2" stroke="#9c9648" stroke-width="1"/><path d="M0.5 5.5H2.5" stroke="#9c9648" stroke-width="1"/><path d="M7 3.5h5.5M7 5.5h5.5M7 7.5h5.5" stroke="#9c9648" stroke-width="1" opacity="0.75"/><rect x="4" y="5" width="1" height="1" fill="#9c9648" opacity="0.7"/></svg>
<div class="t" style="left:754.2px;top:574.9px;font-size:11.3px;line-height:15px;color:#000;font-weight:normal;">ResultsGroup</div>
<div class="t" style="left:893.0px;top:574.9px;font-size:11.3px;line-height:15px;color:#000;font-weight:normal;transform:scaleX(0.9870);transform-origin:0 0;">{&quot;ExamGroup&quot;,&quot;Course examination&quot;,&quot;4.50&quot;,&quot;&quot;,&quot;&quot;,&quot;&quot;,&quot;&quot;,&quot;...</div>
<div class="t" style="left:1180.5px;top:574.7px;font-size:11.0px;line-height:14px;color:#000;font-weight:normal;">=Sheet1!$8:$8</div>
<div class="t" style="left:1300.2px;top:574.9px;font-size:11.3px;line-height:15px;color:#000;font-weight:normal;transform:scaleX(1.0817);transform-origin:0 0;">Workbook</div>
<svg class="r" style="left:735px;top:592px" width="16" height="12" viewBox="0 0 16 12"><path d="M4.5 1.5H13.5Q14.5 1.5 14.5 2.5V8.5Q14.5 9.5 13.5 9.5H4.5L2.5 7.5V3.5z" fill="#fbfae2" stroke="#9c9648" stroke-width="1"/><path d="M0.5 5.5H2.5" stroke="#9c9648" stroke-width="1"/><path d="M7 3.5h5.5M7 5.5h5.5M7 7.5h5.5" stroke="#9c9648" stroke-width="1" opacity="0.75"/><rect x="4" y="5" width="1" height="1" fill="#9c9648" opacity="0.7"/></svg>
<div class="t" style="left:754.2px;top:591.9px;font-size:11.3px;line-height:15px;color:#000;font-weight:normal;">SequenceNumber</div>
<div class="t" style="left:893.0px;top:591.9px;font-size:11.3px;line-height:15px;color:#000;font-weight:normal;">1</div>
<div class="t" style="left:1180.5px;top:591.7px;font-size:11.0px;line-height:14px;color:#000;font-weight:normal;">=Sheet1!$C$10</div>
<div class="t" style="left:1300.2px;top:591.9px;font-size:11.3px;line-height:15px;color:#000;font-weight:normal;transform:scaleX(1.0817);transform-origin:0 0;">Workbook</div>
<svg class="r" style="left:735px;top:609px" width="16" height="12" viewBox="0 0 16 12"><path d="M4.5 1.5H13.5Q14.5 1.5 14.5 2.5V8.5Q14.5 9.5 13.5 9.5H4.5L2.5 7.5V3.5z" fill="#fbfae2" stroke="#9c9648" stroke-width="1"/><path d="M0.5 5.5H2.5" stroke="#9c9648" stroke-width="1"/><path d="M7 3.5h5.5M7 5.5h5.5M7 7.5h5.5" stroke="#9c9648" stroke-width="1" opacity="0.75"/><rect x="4" y="5" width="1" height="1" fill="#9c9648" opacity="0.7"/></svg>
<div class="t" style="left:754.2px;top:608.9px;font-size:11.3px;line-height:15px;color:#000;font-weight:normal;">SequenceNumber_</div>
<div class="t" style="left:893.0px;top:608.9px;font-size:11.3px;line-height:15px;color:#000;font-weight:normal;">1</div>
<div class="t" style="left:1180.5px;top:608.7px;font-size:11.0px;line-height:14px;color:#000;font-weight:normal;">=Sheet1!$C$13</div>
<div class="t" style="left:1300.2px;top:608.9px;font-size:11.3px;line-height:15px;color:#000;font-weight:normal;transform:scaleX(1.0817);transform-origin:0 0;">Workbook</div>
<svg class="r" style="left:735px;top:626px" width="16" height="12" viewBox="0 0 16 12"><path d="M4.5 1.5H13.5Q14.5 1.5 14.5 2.5V8.5Q14.5 9.5 13.5 9.5H4.5L2.5 7.5V3.5z" fill="#fbfae2" stroke="#9c9648" stroke-width="1"/><path d="M0.5 5.5H2.5" stroke="#9c9648" stroke-width="1"/><path d="M7 3.5h5.5M7 5.5h5.5M7 7.5h5.5" stroke="#9c9648" stroke-width="1" opacity="0.75"/><rect x="4" y="5" width="1" height="1" fill="#9c9648" opacity="0.7"/></svg>
<div class="t" style="left:754.2px;top:625.9px;font-size:11.3px;line-height:15px;color:#000;font-weight:normal;">Text</div>
<div class="t" style="left:893.0px;top:625.9px;font-size:11.3px;line-height:15px;color:#000;font-weight:normal;transform:scaleX(1.0441);transform-origin:0 0;">Should you do your school supply shopping at the ...</div>
<div class="t" style="left:1180.5px;top:625.7px;font-size:11.0px;line-height:14px;color:#000;font-weight:normal;">=Sheet1!$D$10</div>
<div class="t" style="left:1300.2px;top:625.9px;font-size:11.3px;line-height:15px;color:#000;font-weight:normal;transform:scaleX(1.0817);transform-origin:0 0;">Workbook</div>
<svg class="r" style="left:735px;top:643px" width="16" height="12" viewBox="0 0 16 12"><path d="M4.5 1.5H13.5Q14.5 1.5 14.5 2.5V8.5Q14.5 9.5 13.5 9.5H4.5L2.5 7.5V3.5z" fill="#fbfae2" stroke="#9c9648" stroke-width="1"/><path d="M0.5 5.5H2.5" stroke="#9c9648" stroke-width="1"/><path d="M7 3.5h5.5M7 5.5h5.5M7 7.5h5.5" stroke="#9c9648" stroke-width="1" opacity="0.75"/><rect x="4" y="5" width="1" height="1" fill="#9c9648" opacity="0.7"/></svg>
<div class="t" style="left:754.2px;top:642.9px;font-size:11.3px;line-height:15px;color:#000;font-weight:normal;">Text_</div>
<div class="t" style="left:893.0px;top:642.9px;font-size:11.3px;line-height:15px;color:#000;font-weight:normal;">Never required</div>
<div class="t" style="left:1180.5px;top:642.7px;font-size:11.0px;line-height:14px;color:#000;font-weight:normal;">=Sheet1!$D$13</div>
<div class="t" style="left:1300.2px;top:642.9px;font-size:11.3px;line-height:15px;color:#000;font-weight:normal;transform:scaleX(1.0817);transform-origin:0 0;">Workbook</div>
<div class="r" style="left:731px;top:683px;width:674px;height:16px;background:#F0F0F0;"></div>
<div class="r" style="left:749px;top:683px;width:548px;height:15px;background:#CDCDCD;"></div>
<svg class="r" style="left:736px;top:685px" width="8" height="11" viewBox="0 0 8 11"><path d="M6.2 1.5L2 5.5 6.2 9.5" fill="none" stroke="#555" stroke-width="2.2"/></svg>
<svg class="r" style="left:1392px;top:685px" width="8" height="11" viewBox="0 0 8 11"><path d="M1.8 1.5L6 5.5 1.8 9.5" fill="none" stroke="#555" stroke-width="2.2"/></svg>
<div class="t" style="left:730.0px;top:703.8px;font-size:11.3px;line-height:15px;color:#000;font-weight:normal;">Refers to:</div>
<div class="r" style="left:730px;top:716.5px;width:7px;height:1px;background:#000;"></div>
<div class="r" style="left:731px;top:720px;width:19px;height:19px;background:#D4D4D4;border:1px solid #cacaca;box-sizing:border-box"></div>
<div class="r" style="left:752px;top:720px;width:19px;height:19px;background:#D4D4D4;border:1px solid #cacaca;box-sizing:border-box"></div>
<svg class="r" style="left:733px;top:722px" width="16" height="15" viewBox="0 0 16 15"><path d="M1.5 2l12 11M13.5 2l-12 11" stroke="#a8a8a8" stroke-width="2"/></svg>
<svg class="r" style="left:753px;top:722px" width="16" height="15" viewBox="0 0 16 15"><path d="M2 8l4 4.5L14 2" stroke="#bdbdbd" stroke-width="2" fill="none"/></svg>
<div class="r" style="left:781px;top:720px;width:604px;height:20px;background:#fff;border:1px solid #ABABAB;box-sizing:border-box"></div>
<div class="t" style="left:785.7px;top:724.0px;font-size:11.0px;line-height:14px;color:#000;font-weight:normal;">=Sheet1!$5:$14</div>
<div class="r" style="left:1384px;top:720px;width:22px;height:20px;background:#E1E1E1;border:1px solid #ABABAB;box-sizing:border-box"></div>
<svg class="r" style="left:1387px;top:723px" width="17" height="14" viewBox="0 0 17 14"><rect x="0.5" y="0.5" width="16" height="13" fill="#fff" stroke="#5a7fc0"/><path d="M0.5 4.5h16M0.5 9h16M5.5 0.5v13M11 0.5v13" stroke="#5a7fc0" stroke-width="1"/><path d="M7 3l6 6-2 .2 1.8 2.8-1.3.8-1.8-2.8-1.6 1.4z" fill="#d83020"/></svg>
<div class="r" style="left:1331px;top:751px;width:74px;height:22px;background:#E1E1E1;border:1px solid #ADADAD;box-sizing:border-box"></div>
<div class="t" style="left:1353.5px;top:755.0px;font-size:11.6px;line-height:15px;color:#000;font-weight:normal;">Close</div>
<svg class="r" style="left:1397px;top:766px" width="14" height="14" viewBox="0 0 14 14"><path d="M13 3L3 13M13 7L7 13M13 11l-2 2" stroke="#9a9a9a" stroke-width="1"/></svg>
</body></html>
